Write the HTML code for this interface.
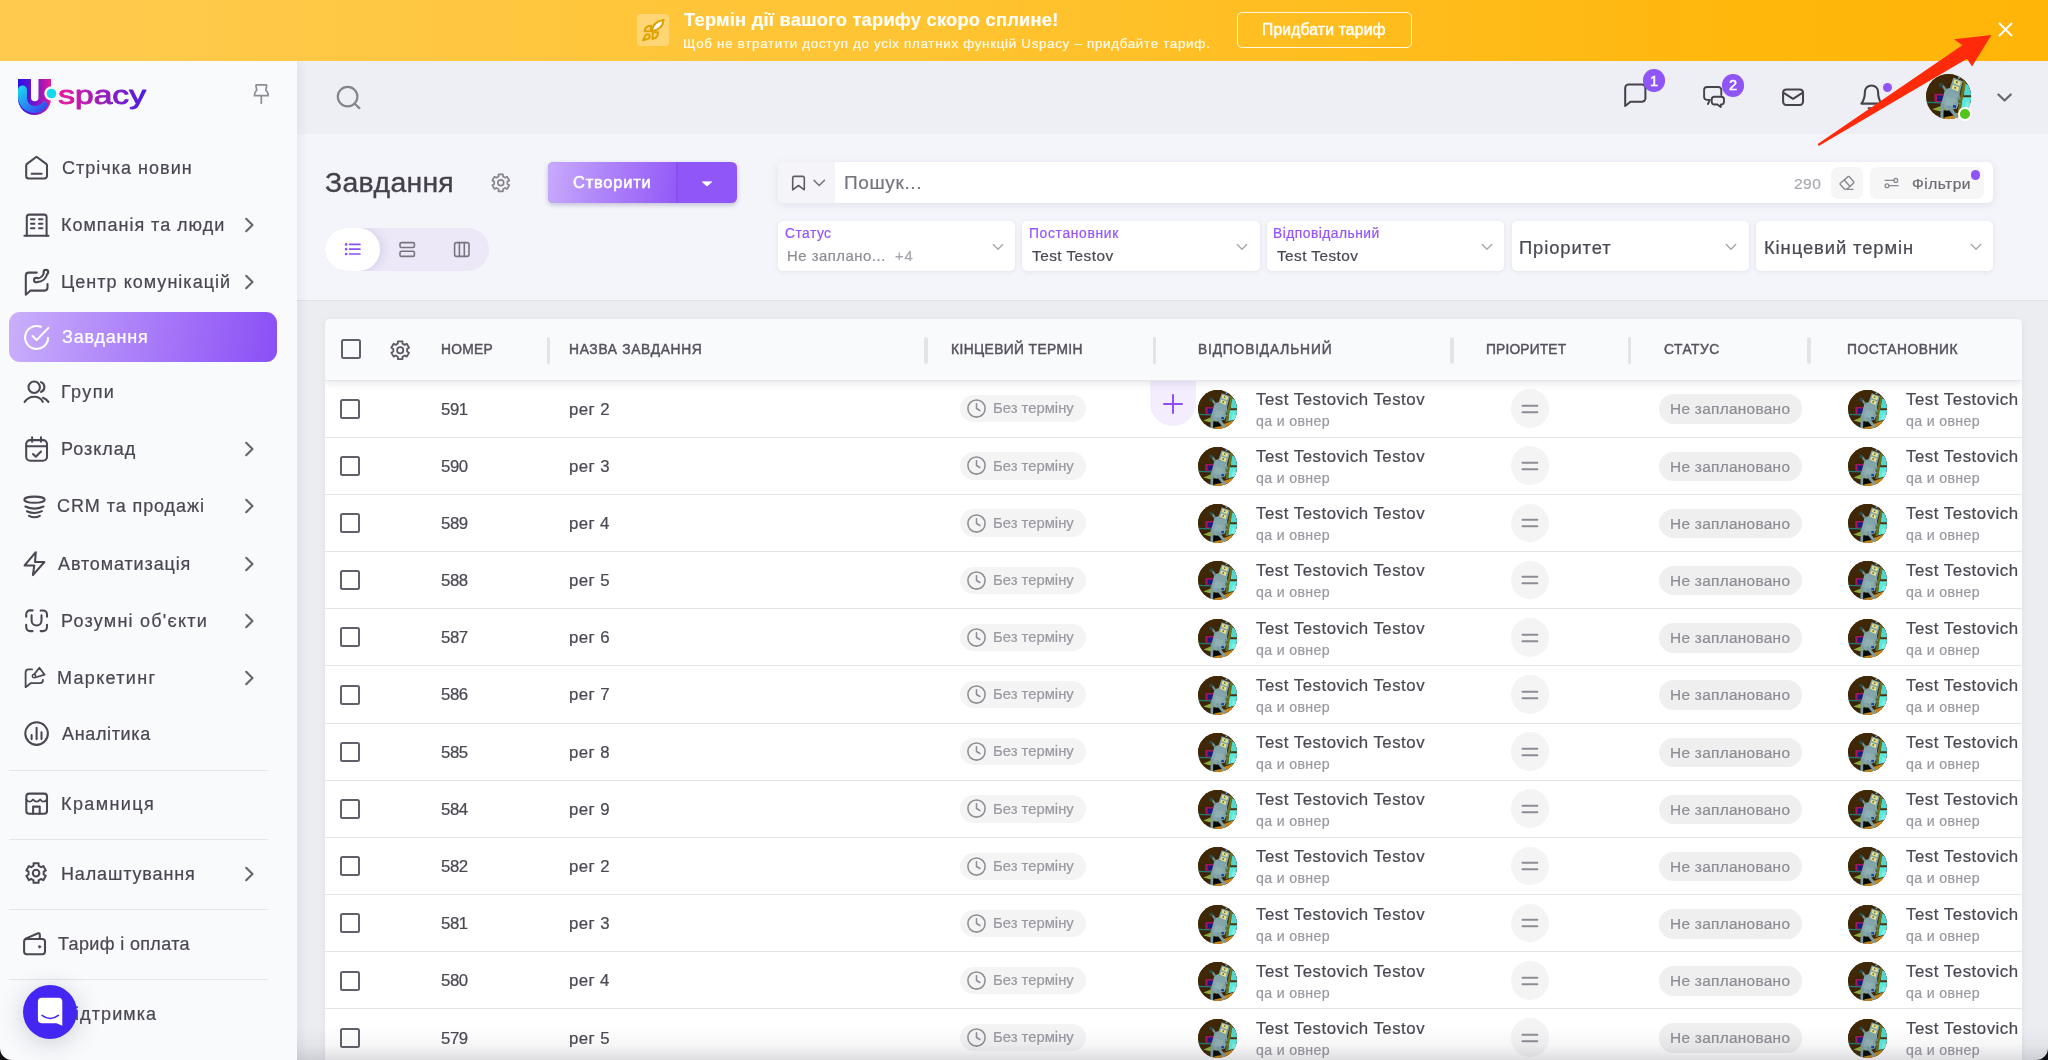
<!DOCTYPE html>
<html lang="uk"><head><meta charset="utf-8"><title>Завдання — Uspacy</title>
<style>
*{box-sizing:border-box;margin:0;padding:0}
html,body{width:2048px;height:1060px;overflow:hidden}
body{font-family:"Liberation Sans",sans-serif;background:#ecedf1;position:relative;color:#4a4852}
#root{position:absolute;left:0;top:0;width:2048px;height:1060px;overflow:hidden;transform:translateZ(0)}
.t{position:absolute;white-space:pre;display:block;-webkit-text-stroke:.22px currentColor;will-change:transform}
.i{position:absolute;display:block;overflow:visible}
.abs{position:absolute}
#banner{position:absolute;left:0;top:0;width:2048px;height:60.5px;z-index:5;background:linear-gradient(90deg,#ffca4f 0%,#ffc432 45%,#ffb70c 85%,#ffb508 100%)}
#side{position:absolute;left:0;top:60px;width:296.8px;height:1000px;background:#f9fafc;box-shadow:2px 0 10px rgba(60,60,100,.085);z-index:3}
#hdr{position:absolute;left:297px;top:60px;width:1751px;height:74px;background:#eeeff4}
#tool{position:absolute;left:297px;top:134px;width:1751px;height:167px;background:#f4f5fa;border-bottom:1px solid #dfe0e6}
#sidec{position:absolute;left:0;top:0;width:297px;height:1060px;z-index:4}
.div{position:absolute;left:9px;width:259px;height:1px;background:#e4e4e9}
.fbox{position:absolute;top:221px;height:49.7px;background:#fff;border-radius:5px;box-shadow:0 1px 4px rgba(70,60,110,.1)}
#table{position:absolute;left:325px;top:319px;width:1697px;height:760px;background:#fff;border-radius:5px 5px 0 0;overflow:hidden;box-shadow:0 1px 6px rgba(60,60,90,.08)}
#thead{position:absolute;left:0;top:0;width:1697px;height:61.5px;background:#f9fafc;box-shadow:0 2px 8px rgba(60,60,90,.13);border-bottom:1px solid #e6e6ea}
.row{position:absolute;left:0;width:1697px;height:57.2px;border-bottom:1px solid #e4e4e7}
.cb{position:absolute;width:20px;height:20px;border:2px solid #625f6b;border-radius:2.5px;background:#fff}
.cdiv{position:absolute;top:17.5px;width:3.6px;height:27px;border-radius:2px;background:#e4e4e8}
.pill{position:absolute;background:#f4f4f5;border-radius:14px}
</style></head><body><div id="root">

<div id="side"></div><div id="sidec">
<svg class="i" style="left:14px;top:72px" width="150" height="50" viewBox="0 0 150 50">
<defs><linearGradient id="lg1" x1="0" y1="0" x2="1" y2="0"><stop offset="0" stop-color="#2a10e8"/><stop offset=".55" stop-color="#7a16c8"/><stop offset="1" stop-color="#e8189a"/></linearGradient>
<linearGradient id="lg2" x1="0" y1="0" x2="1" y2="1"><stop offset="0" stop-color="#18e0f0"/><stop offset="1" stop-color="#3a30f0"/></linearGradient>
<linearGradient id="lg3" x1="0" y1="0" x2="1" y2="0"><stop offset="0" stop-color="#e8189a"/><stop offset="1" stop-color="#4a1ee0"/></linearGradient></defs>
<path d="M4 7h33v19.5a16.5 16.5 0 0 1-33 0z" fill="url(#lg1)"/>
<path d="M4 18a4.5 4.5 0 0 1 9 0v8.5a7.5 7.5 0 0 0 7.5 7.5c4 0 7.5-2 9.5-5.5l4.5 4c-3 5-8 8.5-14 8.5a16.5 16.5 0 0 1-16.5-16.5z" fill="url(#lg2)"/>
<path d="M17 7h7.5v18.5a3.75 3.75 0 0 1-7.5 0z" fill="#f9fafc"/>
<circle cx="37.5" cy="21.5" r="7.2" fill="#f9fafc"/><circle cx="37.5" cy="21.5" r="4.8" fill="#14d8f0"/>
<text x="44.3" y="32.4" font-family="Liberation Sans, sans-serif" font-size="25.6" font-weight="400" fill="url(#lg3)" stroke="url(#lg3)" stroke-width=".9" stroke-linejoin="round" textLength="87.6" lengthAdjust="spacingAndGlyphs">spacy</text>
</svg>
<svg class="i" style="left:252px;top:82px;" width="20" height="24" viewBox="252 82 20 24" fill="none" stroke="#8e8c94" stroke-width="1.7" stroke-linecap="round" stroke-linejoin="round"><path d="M256.6 84.9h9.4c.5 0 .8.4.7.9l-.9 4.3c1.5 1.1 2.4 2.9 2.4 5.6H254.4c0-2.7.9-4.5 2.4-5.6l-.9-4.3c-.1-.5.2-.9.7-.9zM261.3 95.7v7.5"/></svg>
<div class="abs" style="left:9px;top:311.9px;width:268px;height:50px;border-radius:11px;background:linear-gradient(100deg,#c9b0fb 0%,#ad82f9 45%,#8a4ff6 100%)"></div>
<svg class="i" style="left:22px;top:152px;" width="30" height="30" viewBox="22 152 30 30" fill="none" stroke="#4a4752" stroke-width="2.05" stroke-linecap="round" stroke-linejoin="round"><path d="M36.5 156.7l9.7 7.2q.8.6.8 1.6v10.4a2.5 2.5 0 0 1-2.5 2.5H28.7a2.5 2.5 0 0 1-2.5-2.5V165.5q0-1 .8-1.6z"/><path d="M31.7 173.8h9.9"/></svg>
<span class="t" style="left:61.7px;top:157px;font-size:18px;line-height:22px;letter-spacing:1.021px;color:#4a4752;">Стрічка новин</span>
<svg class="i" style="left:22px;top:210px;" width="30" height="30" viewBox="22 210 30 30" fill="none" stroke="#4a4752" stroke-width="2.05" stroke-linecap="round" stroke-linejoin="round"><path d="M26.8 235.7V217.1a2.5 2.5 0 0 1 2.5-2.5h14.8a2.5 2.5 0 0 1 2.5 2.5v18.6"/><path d="M24.4 235.7h24.1"/><path d="M31 219.3h3.4M39 219.3h3.4M31 223.8h3.4M39 223.8h3.4M31 228.3h3.4M39 228.3h3.4"/></svg>
<span class="t" style="left:61.2px;top:214px;font-size:18px;line-height:22px;letter-spacing:0.977px;color:#4a4752;">Компанія та люди</span>
<svg class="i" style="left:240px;top:214.9px;" width="20" height="20" viewBox="240 214.9 20 20" fill="none" stroke="#67646e" stroke-width="2.1" stroke-linecap="round" stroke-linejoin="round"><path d="M246.2 218.7l6.3 6.2-6.3 6.2"/></svg>
<svg class="i" style="left:22px;top:266px;" width="30" height="32" viewBox="22 266 30 32" fill="none" stroke="#4a4752" stroke-width="2.05" stroke-linecap="round" stroke-linejoin="round"><path d="M36.8 272.6H28.8a3 3 0 0 0-3 3v19.2l4.8-4.2h13.9a3 3 0 0 0 3-3V284"/><path d="M36.3 280.2q8 .3 9.6-8.2" stroke-width="5.4"/><circle cx="36.3" cy="280.1" r="2.3" fill="#4a4752"/><circle cx="45.9" cy="272.1" r="2.3" fill="#4a4752"/><path d="M36.3 280.2q8 .3 9.6-8.2" stroke="#f9fafc" stroke-width="1.5"/><circle cx="36.3" cy="280.1" r="1.2" fill="#f9fafc" stroke="none"/><circle cx="45.9" cy="272.1" r="1.2" fill="#f9fafc" stroke="none"/></svg>
<span class="t" style="left:61.2px;top:271px;font-size:18px;line-height:22px;letter-spacing:1.019px;color:#4a4752;">Центр комунікацій</span>
<svg class="i" style="left:240px;top:271.9px;" width="20" height="20" viewBox="240 271.9 20 20" fill="none" stroke="#67646e" stroke-width="2.1" stroke-linecap="round" stroke-linejoin="round"><path d="M246.2 275.7l6.3 6.2-6.3 6.2"/></svg>
<svg class="i" style="left:22px;top:322px;" width="30" height="30" viewBox="22 322 30 30" fill="none" stroke="#ffffff" stroke-width="2.05" stroke-linecap="round" stroke-linejoin="round"><path d="M48.1 337.9A11.5 11.5 0 1 1 40.9 326.8"/><path d="M32.6 336l4 4.1 11.8-12.2"/></svg>
<span class="t" style="left:62.35px;top:326px;font-size:18px;line-height:22px;letter-spacing:0.757px;color:#ffffff;">Завдання</span>
<svg class="i" style="left:22px;top:378px;" width="30" height="28" viewBox="22 378 30 28" fill="none" stroke="#4a4752" stroke-width="2.05" stroke-linecap="round" stroke-linejoin="round"><circle cx="34.2" cy="387.3" r="5.7"/><path d="M24.6 401.9q3.4-5.2 9.6-5.2t8.6 5.2"/><path d="M41 382.1a5.3 5.3 0 0 1 0 9.9"/><path d="M43 397.7q3.4 1 5.4 4.2"/></svg>
<span class="t" style="left:61.2px;top:381px;font-size:18px;line-height:22px;letter-spacing:1.388px;color:#4a4752;">Групи</span>
<svg class="i" style="left:22px;top:434px;" width="30" height="30" viewBox="22 434 30 30" fill="none" stroke="#4a4752" stroke-width="2.05" stroke-linecap="round" stroke-linejoin="round"><rect x="26.2" y="440.1" width="20.8" height="20.7" rx="4"/><path d="M32.1 437.2v4.6M41 437.2v4.6M26.2 446.3h20.8"/><path d="M32.9 454.1l2.9 2.6 5.2-5.2"/></svg>
<span class="t" style="left:61.2px;top:438px;font-size:18px;line-height:22px;letter-spacing:0.983px;color:#4a4752;">Розклад</span>
<svg class="i" style="left:240px;top:438.9px;" width="20" height="20" viewBox="240 438.9 20 20" fill="none" stroke="#67646e" stroke-width="2.1" stroke-linecap="round" stroke-linejoin="round"><path d="M246.2 442.7l6.3 6.2-6.3 6.2"/></svg>
<svg class="i" style="left:22px;top:494px;" width="28" height="28" viewBox="22 494 28 28" fill="none" stroke="#4a4752" stroke-width="2.05" stroke-linecap="round" stroke-linejoin="round"><ellipse cx="34.5" cy="499.7" rx="10.2" ry="3.1"/><path d="M25.4 506.5q9.1 4.2 18.1 0"/><path d="M26.9 511.2q7.6 3.6 15.1 0"/><path d="M29 515.8q5.5 2.8 10.9 0"/></svg>
<span class="t" style="left:57.2px;top:495px;font-size:18px;line-height:22px;letter-spacing:0.919px;color:#4a4752;">CRM та продажі</span>
<svg class="i" style="left:240px;top:496.3px;" width="20" height="20" viewBox="240 496.3 20 20" fill="none" stroke="#67646e" stroke-width="2.1" stroke-linecap="round" stroke-linejoin="round"><path d="M246.2 500.1l6.3 6.2-6.3 6.2"/></svg>
<svg class="i" style="left:22px;top:548px;" width="28" height="32" viewBox="22 548 28 32" fill="none" stroke="#4a4752" stroke-width="2.05" stroke-linecap="round" stroke-linejoin="round"><path d="M35.8 552.2L24.6 565.4h9.7l-1.4 9.7 11.5-13.1h-9.4z"/></svg>
<span class="t" style="left:58.2px;top:553px;font-size:18px;line-height:22px;letter-spacing:0.875px;color:#4a4752;">Автоматизація</span>
<svg class="i" style="left:240px;top:553.5px;" width="20" height="20" viewBox="240 553.5 20 20" fill="none" stroke="#67646e" stroke-width="2.1" stroke-linecap="round" stroke-linejoin="round"><path d="M246.2 557.3l6.3 6.2-6.3 6.2"/></svg>
<svg class="i" style="left:22px;top:606px;" width="30" height="30" viewBox="22 606 30 30" fill="none" stroke="#4a4752" stroke-width="2.05" stroke-linecap="round" stroke-linejoin="round"><path d="M26.2 616.8v-2.4a4 4 0 0 1 4-4h2.4M40.6 610.4h2.4a4 4 0 0 1 4 4v2.4M47 624.7v2.4a4 4 0 0 1-4 4h-2.4M32.6 631.1h-2.4a4 4 0 0 1-4-4v-2.4"/><path d="M31.6 615.3v5.3a4.95 4.95 0 0 0 9.9 0v-5.3"/></svg>
<span class="t" style="left:61.3px;top:610px;font-size:18px;line-height:22px;letter-spacing:1.232px;color:#4a4752;">Розумні об'єкти</span>
<svg class="i" style="left:240px;top:610.7px;" width="20" height="20" viewBox="240 610.7 20 20" fill="none" stroke="#67646e" stroke-width="2.1" stroke-linecap="round" stroke-linejoin="round"><path d="M246.2 614.5l6.3 6.2-6.3 6.2"/></svg>
<svg class="i" style="left:22px;top:664px;" width="28" height="28" viewBox="22 664 28 28" fill="none" stroke="#4a4752" stroke-width="2.05" stroke-linecap="round" stroke-linejoin="round"><path d="M32.1 669.3h-3.6a2.9 2.9 0 0 0-2.9 2.9v15l5-4h9.4a2.9 2.9 0 0 0 2.9-2.9v-.5" stroke-width="1.8"/><path d="M34.3 674.2l5.1-6.5 5.2 7-9.3 2.8" stroke-width="1.8"/><circle cx="34" cy="676.1" r="1.7" stroke-width="1.5"/></svg>
<span class="t" style="left:57.1px;top:667px;font-size:18px;line-height:22px;letter-spacing:1.312px;color:#4a4752;">Маркетинг</span>
<svg class="i" style="left:240px;top:667.9px;" width="20" height="20" viewBox="240 667.9 20 20" fill="none" stroke="#67646e" stroke-width="2.1" stroke-linecap="round" stroke-linejoin="round"><path d="M246.2 671.7l6.3 6.2-6.3 6.2"/></svg>
<svg class="i" style="left:22px;top:718px;" width="30" height="32" viewBox="22 718 30 32" fill="none" stroke="#4a4752" stroke-width="2.05" stroke-linecap="round" stroke-linejoin="round"><circle cx="36.6" cy="733.6" r="11.3"/><path d="M31.6 734.9v4.2M36.6 727.7v11.4M41.5 732.3v6.8"/></svg>
<span class="t" style="left:62.1px;top:723px;font-size:18px;line-height:22px;letter-spacing:0.65px;color:#4a4752;">Аналітика</span>
<svg class="i" style="left:22px;top:788px;" width="30" height="32" viewBox="22 788 30 32" fill="none" stroke="#4a4752" stroke-width="2.05" stroke-linecap="round" stroke-linejoin="round"><rect x="26.3" y="793.6" width="20.7" height="20.1" rx="2.8"/><path d="M26.3 799.4q3.3 4.6 6.6 0q3.7 4.6 7.4 0q3.3 4.6 6.7 0" stroke-width="1.8"/><path d="M33.1 813.7v-7.1h6.6v7.1"/></svg>
<span class="t" style="left:61px;top:793px;font-size:18px;line-height:22px;letter-spacing:1.393px;color:#4a4752;">Крамниця</span>
<svg class="i" style="left:24.4px;top:861.4px;" width="24.2" height="24.2" viewBox="24.4 861.4 24.2 24.2" fill="none" stroke="#4a4752" stroke-width="2" stroke-linecap="round" stroke-linejoin="round"><path d="M33.93 866.24L33.97 863.72L39.03 863.72L39.07 866.24L41.5 867.64L43.7 866.42L46.23 870.8L44.07 872.1L44.07 874.9L46.23 876.2L43.7 880.58L41.5 879.36L39.07 880.76L39.03 883.28L33.97 883.28L33.93 880.76L31.5 879.36L29.3 880.58L26.77 876.2L28.93 874.9L28.93 872.1L26.77 870.8L29.3 866.42L31.5 867.64z"/><circle cx="36.5" cy="873.5" r="3.3"/></svg>
<span class="t" style="left:61px;top:863px;font-size:18px;line-height:22px;letter-spacing:0.85px;color:#4a4752;">Налаштування</span>
<svg class="i" style="left:240px;top:863.9px;" width="20" height="20" viewBox="240 863.9 20 20" fill="none" stroke="#67646e" stroke-width="2.1" stroke-linecap="round" stroke-linejoin="round"><path d="M246.2 867.7l6.3 6.2-6.3 6.2"/></svg>
<svg class="i" style="left:20px;top:928px;" width="30" height="32" viewBox="20 928 30 32" fill="none" stroke="#4a4752" stroke-width="2.05" stroke-linecap="round" stroke-linejoin="round"><rect x="24.1" y="939" width="20.9" height="15.2" rx="2.6"/><path d="M25.5 938.6l12.7-5.3q1.5-.5 1.6 1v4.3"/><circle cx="39.6" cy="946.8" r="1.2" fill="#4a4752" stroke-width=".6"/></svg>
<span class="t" style="left:57.6px;top:933px;font-size:18px;line-height:22px;letter-spacing:0.354px;color:#4a4752;">Тариф і оплата</span>
<svg class="i" style="left:22px;top:998px;" width="30" height="32" viewBox="22 998 30 32" fill="none" stroke="#4a4752" stroke-width="2.05" stroke-linecap="round" stroke-linejoin="round"><circle cx="36.6" cy="1013.3" r="11.3"/></svg>
<span class="t" style="left:61px;top:1003px;font-size:18px;line-height:22px;letter-spacing:1.087px;color:#4a4752;">Підтримка</span>
<div class="div" style="top:769.6px"></div>
<div class="div" style="top:838.8px"></div>
<div class="div" style="top:908.8px"></div>
<div class="div" style="top:978.9px"></div>
<div class="abs" style="left:23.2px;top:984.9px;width:54px;height:54px;border-radius:50%;background:#4326f1;box-shadow:0 4px 26px rgba(30,30,60,.2)"></div>
<svg class="i" style="left:34px;top:994px;" width="32" height="36" viewBox="34 994 32 36" fill="none" stroke="#4a4752" stroke-width="2" stroke-linecap="round" stroke-linejoin="round"><path d="M41.9 997.7h16.4a4 4 0 0 1 4 4v24.1l-5.8-2.6H41.9a4 4 0 0 1-4-4v-17.5a4 4 0 0 1 4-4z" fill="#fff" stroke="none"/><path d="M42 1015.4q8.2 6.2 16.4 0" stroke="#4326f1" stroke-width="1.6"/></svg>
<svg class="i" style="left:0;top:1048px" width="12" height="12" viewBox="0 0 12 12"><path d="M0 0v12h12A12 12 0 0 1 0 0z" fill="#101014"/></svg>
</div>
<div id="hdr"></div>
<svg class="i" style="left:334px;top:84px;" width="30" height="28" viewBox="334 84 30 28" fill="none" stroke="#85838b" stroke-width="2.2" stroke-linecap="round" stroke-linejoin="round"><circle cx="347.6" cy="96.6" r="9.8"/><path d="M355 104l4.4 4.1"/></svg>
<svg class="i" style="left:1620px;top:80px;" width="30" height="30" viewBox="1620 80 30 30" fill="none" stroke="#45424d" stroke-width="2.05" stroke-linecap="round" stroke-linejoin="round"><path d="M1625.2 106V88a3.5 3.5 0 0 1 3.5-3.5h13.2a3.5 3.5 0 0 1 3.5 3.5v10.2a3.5 3.5 0 0 1-3.5 3.5h-11.4z"/></svg>
<svg class="i" style="left:1700px;top:82px;" width="30" height="28" viewBox="1700 82 30 28" fill="none" stroke="#45424d" stroke-width="1.9" stroke-linecap="round" stroke-linejoin="round"><path d="M1707.9 104l2-4.1h-2.8a3 3 0 0 1-3-3V90a3 3 0 0 1 3-3h11.2a3 3 0 0 1 3 3v5"/><path d="M1714.4 96.8h6.9a2.7 2.7 0 0 1 2.7 2.7v2.3a2.7 2.7 0 0 1-2.7 2.7h-.4l-.2 2.5-3.2-2.5h-3.1a2.7 2.7 0 0 1-2.7-2.7v-2.3a2.7 2.7 0 0 1 2.7-2.7z" fill="#eeeff4"/></svg>
<svg class="i" style="left:1778px;top:84px;" width="30" height="26" viewBox="1778 84 30 26" fill="none" stroke="#45424d" stroke-width="2.05" stroke-linecap="round" stroke-linejoin="round"><rect x="1783.1" y="89.4" width="19.9" height="15.6" rx="3.2"/><path d="M1784.5 93.3l8.5 5.5 8.6-5.5"/></svg>
<svg class="i" style="left:1856px;top:80px;" width="32" height="32" viewBox="1856 80 32 32" fill="none" stroke="#45424d" stroke-width="2.05" stroke-linecap="round" stroke-linejoin="round"><path d="M1864.9 92a6.6 6.6 0 0 1 13.2 0c0 6.5 1.4 9 3.5 11.6h-20.3c2.1-2.6 3.6-5.1 3.6-11.6z"/><path d="M1868.7 108.2h5.8"/></svg>
<div class="abs" style="left:1642.8px;top:69.1px;width:22.6px;height:22.6px;border-radius:50%;background:#8f55f7"></div>
<span class="t" style="left:1649.95px;top:72px;font-size:14.5px;line-height:18px;letter-spacing:0px;color:#fff;-webkit-text-stroke:.5px #fff;">1</span>
<div class="abs" style="left:1721.5px;top:74px;width:22.6px;height:22.6px;border-radius:50%;background:#8f55f7"></div>
<span class="t" style="left:1728.9px;top:76px;font-size:14.5px;line-height:18px;letter-spacing:0px;color:#fff;-webkit-text-stroke:.5px #fff;">2</span>
<div class="abs" style="left:1883px;top:82.6px;width:9.4px;height:9.4px;border-radius:50%;background:#8f55f7"></div>
<svg class="i" style="left:1994px;top:88px;" width="22" height="18" viewBox="1994 88 22 18" fill="none" stroke="#67646e" stroke-width="2.2" stroke-linecap="round" stroke-linejoin="round"><path d="M1998.4 94.5l6.2 6 6.2-6"/></svg>
<svg class="i" style="left:1925.8px;top:74.4px" width="45.2" height="45.2" viewBox="0 0 40 40"><clipPath id="c1"><circle cx="20" cy="20" r="20"/></clipPath><g clip-path="url(#c1)">
<rect width="40" height="40" fill="#3b2506"/>
<path d="M0 0h26l-8 12-18 8z" fill="#402807"/>
<path d="M30 3l10 5v30l-12 2z" fill="#4a3410"/>
<path d="M34.5 8.5l5.5 2v8.3h-6.5z" fill="#50d6cd"/>
<path d="M32 20.6h8v9l-9 2.4z" fill="#5de6dc"/>
<path d="M36 24l4 4v3l-6-1z" fill="#7af0e6"/>
<path d="M33.3 5.5l2.3 1-5.3 26.5-2.3-.5z" fill="#69731f"/>
<path d="M15 40l4-4 10-2 9-3.5v9.5z" fill="#c6871c"/>
<path d="M7.5 17.5h8v7.5h-8z" fill="#a4175a"/>
<path d="M9.8 19h6.2v5h-6.2z" fill="#1b1b7c"/>
<path d="M0 24.3l14 .6v1.3l-14-.5z" fill="#1f7d79"/>
<path d="M5.5 31.3l8-3.3 4.5 3.8-6 1.2z" fill="#8daa3b"/>
<path d="M14 32.5h9.5l2 4-11 2z" fill="#070a06"/>
<path d="M16.8 13.5l6-1.5 6.5 3 1 7.5-3 8-9 2-5.3-5 2.3-7.5z" fill="#84a5a9"/>
<path d="M18 20l8 2-1.5 7-8-2z" fill="#8fb0b3"/>
<path d="M24.3 3.2l8.3 3.2-3.3 12-9-3.7z" fill="#7ea3a8"/>
<path d="M28.8 1.3l1.7.6-.8 2.5-1.7-.6z" fill="#7ea3a8"/>
<path d="M25.2 4.8l5.7 2.2-1 3.4-5.7-2.2z" fill="#e6df8c"/>
<path d="M23.7 9.6l5.6 2.2-1 3.5-5.6-2.2z" fill="#e6df8c"/>
<path d="M26.8 6.3l1.5.6-.5 1.5-1.5-.6zM25.3 11.2l1.5.6-.5 1.5-1.5-.6z" fill="#5f6b3a"/>
<path d="M12.8 9.2l2.7.5 3.3 4.3-1.8 1.6z" fill="#6f9195"/>
<path d="M11.6 8h3.3v3.2h-3.3z" fill="#274b47"/>
<path d="M27.5 20l3 1 .5 5-2 .5z" fill="#708f93"/>
<path d="M28.3 22.5h2.7v3.2h-2.7z" fill="#5b6a2a"/>
<path d="M13 26.5h2.7l-.3 13.5h-2.7z" fill="#7b9da3"/>
<path d="M18.5 29.5l2.5-1.8 8.2 10.5-2.6 1.5z" fill="#7b9da3"/>
<path d="M24 27.3l2.8.5-.3 2.3-2.8-.5z" fill="#1c3da2"/>
</g></svg>
<div class="abs" style="left:1958.1px;top:107px;width:13.6px;height:13.6px;border-radius:50%;background:#52c41a;border:2px solid #fff"></div>
<div id="tool"></div>
<span class="t" style="left:325.4px;top:164px;font-size:28.4px;line-height:36px;letter-spacing:0.279px;color:#44414c;-webkit-text-stroke:.35px #44414c;">Завдання</span>
<svg class="i" style="left:489.8px;top:172.1px;" width="21.6" height="21.6" viewBox="489.8 172.1 21.6 21.6" fill="none" stroke="#85838b" stroke-width="1.7" stroke-linecap="round" stroke-linejoin="round"><path d="M498.36 176.58L498.4 174.38L502.8 174.38L502.84 176.58L504.95 177.81L506.88 176.73L509.08 180.55L507.19 181.68L507.19 184.12L509.08 185.25L506.88 189.07L504.95 187.99L502.84 189.22L502.8 191.42L498.4 191.42L498.36 189.22L496.25 187.99L494.32 189.07L492.12 185.25L494.01 184.12L494.01 181.68L492.12 180.55L494.32 176.73L496.25 177.81z"/><circle cx="500.6" cy="182.9" r="2.9"/></svg>
<div class="abs" style="left:548px;top:162px;width:189.1px;height:41.4px;border-radius:5.5px;background:#9056f8;box-shadow:0 2px 5px rgba(70,50,120,.28);overflow:hidden"><div class="abs" style="left:0;top:0;width:128.5px;height:41.4px;background:linear-gradient(100deg,#c8abfc 0%,#ae83fa 45%,#9259f7 100%)"></div></div>
<div class="abs" style="left:676px;top:162px;width:1.5px;height:41.4px;background:#8950f0"></div>
<span class="t" style="left:573.35px;top:172px;font-size:16.4px;line-height:20px;letter-spacing:0.829px;color:#fff;-webkit-text-stroke:.55px #fff;">Створити</span>
<svg class="i" style="left:701.3px;top:180.8px" width="12" height="7" viewBox="0 0 12 7"><path d="M1.4 .9h9.2L6 5z" fill="#fff" stroke="#fff" stroke-width="1" stroke-linejoin="round"/></svg>
<div class="abs" style="left:325px;top:228px;width:164.2px;height:42.8px;border-radius:21.4px;background:#ece8f7;overflow:hidden"><div class="abs" style="left:0;top:0;width:55px;height:42.8px;border-radius:21.4px;background:#fff;box-shadow:3px 0 9px rgba(120,90,190,.16)"></div></div>
<svg class="i" style="left:342px;top:240px;" width="22" height="20" viewBox="342 240 22 20" fill="none" stroke="#8b50f5" stroke-width="2" stroke-linecap="round" stroke-linejoin="round"><path d="M349.6 244.4h10.3M349.6 249.2h10.3M349.6 254h10.3" stroke-width="1.7"/><path d="M346.1 244.4h.01M346.1 249.2h.01M346.1 254h.01" stroke-width="2.7"/></svg>
<svg class="i" style="left:396px;top:238px;" width="22" height="22" viewBox="396 238 22 22" fill="none" stroke="#77757d" stroke-width="1.6" stroke-linecap="round" stroke-linejoin="round"><rect x="400" y="242.6" width="14.4" height="4.9" rx="1.5"/><rect x="400" y="251.3" width="14.4" height="5.1" rx="1.5"/></svg>
<svg class="i" style="left:450px;top:238px;" width="24" height="22" viewBox="450 238 24 22" fill="none" stroke="#77757d" stroke-width="1.6" stroke-linecap="round" stroke-linejoin="round"><rect x="454.6" y="242.6" width="14.4" height="13.8" rx="1.8"/><path d="M459.4 242.6v13.8M464.3 242.6v13.8"/></svg>
<div class="abs" style="left:778px;top:162.2px;width:1215px;height:41.3px;border-radius:6px;background:#fff;box-shadow:0 2px 8px rgba(70,60,110,.1)"></div>
<div class="abs" style="left:778px;top:162.2px;width:57px;height:41.3px;border-radius:6px 0 0 6px;background:#f5f5f9"></div>
<svg class="i" style="left:788px;top:172px;" width="22" height="22" viewBox="788 172 22 22" fill="none" stroke="#5f5c68" stroke-width="1.6" stroke-linecap="round" stroke-linejoin="round"><path d="M794.2 176.4h8.6a1.5 1.5 0 0 1 1.5 1.5v11.9l-5.8-4.3-5.8 4.3v-11.9a1.5 1.5 0 0 1 1.5-1.5z"/></svg>
<svg class="i" style="left:810px;top:176px;" width="18" height="14" viewBox="810 176 18 14" fill="none" stroke="#77757d" stroke-width="1.5" stroke-linecap="round" stroke-linejoin="round"><path d="M814.1 180.4l5.1 5.1 5.2-5.1"/></svg>
<span class="t" style="left:844px;top:171px;font-size:19px;line-height:24px;letter-spacing:0.636px;color:#77757d;">Пошук...</span>
<span class="t" style="left:1794.05px;top:174px;font-size:15.5px;line-height:19px;letter-spacing:0.5px;color:#aaa8b0;">290</span>
<div class="abs" style="left:1831px;top:167px;width:31.9px;height:31.8px;border-radius:7px;background:#f6f6f7"></div>
<svg class="i" style="left:1838px;top:172px;" width="20" height="22" viewBox="1838 172 20 22" fill="none" stroke="#8a8890" stroke-width="1.4" stroke-linecap="round" stroke-linejoin="round"><path d="M1849.3 176.6l4.4 5.1q.5.6-.1 1.2l-6.4 6.2h-2.7l-4.3-4.6q-.5-.6.1-1.2l7.8-6.7q.6-.5 1.2 0z"/><path d="M1844.5 180.2l5.3 6M1846.5 189.4h6.5"/></svg>
<div class="abs" style="left:1870px;top:167px;width:113.9px;height:31.8px;border-radius:7px;background:#f6f6f7"></div>
<svg class="i" style="left:1880px;top:174px;" width="24" height="18" viewBox="1880 174 24 18" fill="none" stroke="#8a8890" stroke-width="1.3" stroke-linecap="round" stroke-linejoin="round"><path d="M1885.1 180.3h8.6M1889.2 185.7h8.8"/><circle cx="1895.8" cy="180.4" r="1.9"/><circle cx="1887" cy="185.7" r="1.9"/></svg>
<span class="t" style="left:1911.6px;top:174px;font-size:15.5px;line-height:19px;letter-spacing:0.483px;color:#6e6c75;">Фільтри</span>
<div class="abs" style="left:1971.1px;top:170.4px;width:9.4px;height:9.4px;border-radius:50%;background:#8f55f7"></div>
<div class="fbox" style="left:778px;width:237.2px"></div>
<svg class="i" style="left:990.1px;top:240px;" width="16" height="14" viewBox="990.1 240 16 14" fill="none" stroke="#a8a6ae" stroke-width="1.4" stroke-linecap="round" stroke-linejoin="round"><path d="M993.4 244.4l4.7 4.8 4.7-4.8"/></svg>
<div class="fbox" style="left:1022px;width:237.5px"></div>
<svg class="i" style="left:1234.4px;top:240px;" width="16" height="14" viewBox="1234.4 240 16 14" fill="none" stroke="#a8a6ae" stroke-width="1.4" stroke-linecap="round" stroke-linejoin="round"><path d="M1237.7 244.4l4.7 4.8 4.7-4.8"/></svg>
<div class="fbox" style="left:1267px;width:237px"></div>
<svg class="i" style="left:1478.9px;top:240px;" width="16" height="14" viewBox="1478.9 240 16 14" fill="none" stroke="#a8a6ae" stroke-width="1.4" stroke-linecap="round" stroke-linejoin="round"><path d="M1482.2 244.4l4.7 4.8 4.7-4.8"/></svg>
<div class="fbox" style="left:1511.5px;width:237px"></div>
<svg class="i" style="left:1723.4px;top:240px;" width="16" height="14" viewBox="1723.4 240 16 14" fill="none" stroke="#a8a6ae" stroke-width="1.4" stroke-linecap="round" stroke-linejoin="round"><path d="M1726.7 244.4l4.7 4.8 4.7-4.8"/></svg>
<div class="fbox" style="left:1756px;width:237px"></div>
<svg class="i" style="left:1967.9px;top:240px;" width="16" height="14" viewBox="1967.9 240 16 14" fill="none" stroke="#a8a6ae" stroke-width="1.4" stroke-linecap="round" stroke-linejoin="round"><path d="M1971.2 244.4l4.7 4.8 4.7-4.8"/></svg>
<span class="t" style="left:785.25px;top:225px;font-size:13.8px;line-height:17px;letter-spacing:0.48px;color:#9455f7;">Статус</span>
<span class="t" style="left:786.85px;top:247px;font-size:14.8px;line-height:18px;letter-spacing:0.55px;color:#8e8c94;">Не заплано...</span>
<span class="t" style="left:894.75px;top:247px;font-size:14.8px;line-height:18px;letter-spacing:0.75px;color:#a8a6ae;">+4</span>
<span class="t" style="left:1028.5px;top:225px;font-size:13.8px;line-height:17px;letter-spacing:0.695px;color:#9455f7;">Постановник</span>
<span class="t" style="left:1032.25px;top:246px;font-size:15.4px;line-height:19px;letter-spacing:0.445px;color:#4a4852;">Test Testov</span>
<span class="t" style="left:1273.3px;top:225px;font-size:13.8px;line-height:17px;letter-spacing:0.492px;color:#9455f7;">Відповідальний</span>
<span class="t" style="left:1276.55px;top:246px;font-size:15.4px;line-height:19px;letter-spacing:0.415px;color:#4a4852;">Test Testov</span>
<span class="t" style="left:1519.3px;top:236px;font-size:18.4px;line-height:23px;letter-spacing:0.894px;color:#4a4852;">Пріоритет</span>
<span class="t" style="left:1763.8px;top:236px;font-size:18.4px;line-height:23px;letter-spacing:0.904px;color:#4a4852;">Кінцевий термін</span>
<div id="table">
<div class="row" style="top:61.5px"><div class="cb" style="left:15px;top:18.24px"></div></div>
<span class="t" style="left:116.35px;top:80px;font-size:16.8px;line-height:21px;letter-spacing:0px;color:#4a4852;letter-spacing:-.4px;">591</span>
<span class="t" style="left:244.4px;top:80px;font-size:16.8px;line-height:21px;letter-spacing:0.45px;color:#4a4852;">рег 2</span>
<div class="pill" style="left:635.3px;top:76.09px;width:126.1px;height:27.3px"></div>
<svg class="i" style="left:640.9px;top:79.19px;" width="21" height="21" viewBox="0 0 21 21" fill="none" stroke="#8e8c94" stroke-width="1.55" stroke-linecap="round" stroke-linejoin="round"><circle cx="10.5" cy="10.5" r="8.6"/><path d="M10.5 5.8v4.7l3.4 2"/></svg>
<span class="t" style="left:668.45px;top:80px;font-size:14.8px;line-height:18px;letter-spacing:0.015px;color:#9a98a0;">Без терміну</span>
<div class="abs" style="left:825.2px;top:55px;width:45.7px;height:51.8px;border-radius:0 0 22.85px 22.85px;background:#f3edfe"></div>
<svg class="i" style="left:837.1px;top:73.69px;" width="22" height="22" viewBox="0 0 22 22" fill="none" stroke="#8b4ff5" stroke-width="2" stroke-linecap="round" stroke-linejoin="round"><path d="M11 2v18M2 11h18"/></svg>
<svg class="i" style="left:873.1px;top:70.89px" width="39.1" height="39.1" viewBox="0 0 40 40"><clipPath id="c2"><circle cx="20" cy="20" r="20"/></clipPath><g clip-path="url(#c2)">
<rect width="40" height="40" fill="#3b2506"/>
<path d="M0 0h26l-8 12-18 8z" fill="#402807"/>
<path d="M30 3l10 5v30l-12 2z" fill="#4a3410"/>
<path d="M34.5 8.5l5.5 2v8.3h-6.5z" fill="#50d6cd"/>
<path d="M32 20.6h8v9l-9 2.4z" fill="#5de6dc"/>
<path d="M36 24l4 4v3l-6-1z" fill="#7af0e6"/>
<path d="M33.3 5.5l2.3 1-5.3 26.5-2.3-.5z" fill="#69731f"/>
<path d="M15 40l4-4 10-2 9-3.5v9.5z" fill="#c6871c"/>
<path d="M7.5 17.5h8v7.5h-8z" fill="#a4175a"/>
<path d="M9.8 19h6.2v5h-6.2z" fill="#1b1b7c"/>
<path d="M0 24.3l14 .6v1.3l-14-.5z" fill="#1f7d79"/>
<path d="M5.5 31.3l8-3.3 4.5 3.8-6 1.2z" fill="#8daa3b"/>
<path d="M14 32.5h9.5l2 4-11 2z" fill="#070a06"/>
<path d="M16.8 13.5l6-1.5 6.5 3 1 7.5-3 8-9 2-5.3-5 2.3-7.5z" fill="#84a5a9"/>
<path d="M18 20l8 2-1.5 7-8-2z" fill="#8fb0b3"/>
<path d="M24.3 3.2l8.3 3.2-3.3 12-9-3.7z" fill="#7ea3a8"/>
<path d="M28.8 1.3l1.7.6-.8 2.5-1.7-.6z" fill="#7ea3a8"/>
<path d="M25.2 4.8l5.7 2.2-1 3.4-5.7-2.2z" fill="#e6df8c"/>
<path d="M23.7 9.6l5.6 2.2-1 3.5-5.6-2.2z" fill="#e6df8c"/>
<path d="M26.8 6.3l1.5.6-.5 1.5-1.5-.6zM25.3 11.2l1.5.6-.5 1.5-1.5-.6z" fill="#5f6b3a"/>
<path d="M12.8 9.2l2.7.5 3.3 4.3-1.8 1.6z" fill="#6f9195"/>
<path d="M11.6 8h3.3v3.2h-3.3z" fill="#274b47"/>
<path d="M27.5 20l3 1 .5 5-2 .5z" fill="#708f93"/>
<path d="M28.3 22.5h2.7v3.2h-2.7z" fill="#5b6a2a"/>
<path d="M13 26.5h2.7l-.3 13.5h-2.7z" fill="#7b9da3"/>
<path d="M18.5 29.5l2.5-1.8 8.2 10.5-2.6 1.5z" fill="#7b9da3"/>
<path d="M24 27.3l2.8.5-.3 2.3-2.8-.5z" fill="#1c3da2"/>
</g></svg>
<span class="t" style="left:931.25px;top:70px;font-size:16.8px;line-height:21px;letter-spacing:0.53px;color:#4a4852;">Test Testovich Testov</span>
<span class="t" style="left:931px;top:93px;font-size:14.2px;line-height:18px;letter-spacing:0.333px;color:#9a98a0;">qa и овнер</span>
<div class="pill" style="left:1185.6px;top:70.14px;width:38.8px;height:38.7px;border-radius:50%"></div>
<svg class="i" style="left:1195px;top:79.84px;" width="20" height="20" viewBox="0 0 20 20" fill="none" stroke="#8e8c94" stroke-width="2" stroke-linecap="round" stroke-linejoin="round"><path d="M2.5 6.7h14.8M2.5 13.3h14.8"/></svg>
<div class="pill" style="left:1334.2px;top:75.49px;width:142.5px;height:29.4px;border-radius:14.7px;background:#efeff0"></div>
<span class="t" style="left:1345.35px;top:80px;font-size:15.4px;line-height:19px;letter-spacing:0.296px;color:#8e8c94;">Не заплановано</span>
<svg class="i" style="left:1523px;top:70.89px" width="39.1" height="39.1" viewBox="0 0 40 40"><clipPath id="c3"><circle cx="20" cy="20" r="20"/></clipPath><g clip-path="url(#c3)">
<rect width="40" height="40" fill="#3b2506"/>
<path d="M0 0h26l-8 12-18 8z" fill="#402807"/>
<path d="M30 3l10 5v30l-12 2z" fill="#4a3410"/>
<path d="M34.5 8.5l5.5 2v8.3h-6.5z" fill="#50d6cd"/>
<path d="M32 20.6h8v9l-9 2.4z" fill="#5de6dc"/>
<path d="M36 24l4 4v3l-6-1z" fill="#7af0e6"/>
<path d="M33.3 5.5l2.3 1-5.3 26.5-2.3-.5z" fill="#69731f"/>
<path d="M15 40l4-4 10-2 9-3.5v9.5z" fill="#c6871c"/>
<path d="M7.5 17.5h8v7.5h-8z" fill="#a4175a"/>
<path d="M9.8 19h6.2v5h-6.2z" fill="#1b1b7c"/>
<path d="M0 24.3l14 .6v1.3l-14-.5z" fill="#1f7d79"/>
<path d="M5.5 31.3l8-3.3 4.5 3.8-6 1.2z" fill="#8daa3b"/>
<path d="M14 32.5h9.5l2 4-11 2z" fill="#070a06"/>
<path d="M16.8 13.5l6-1.5 6.5 3 1 7.5-3 8-9 2-5.3-5 2.3-7.5z" fill="#84a5a9"/>
<path d="M18 20l8 2-1.5 7-8-2z" fill="#8fb0b3"/>
<path d="M24.3 3.2l8.3 3.2-3.3 12-9-3.7z" fill="#7ea3a8"/>
<path d="M28.8 1.3l1.7.6-.8 2.5-1.7-.6z" fill="#7ea3a8"/>
<path d="M25.2 4.8l5.7 2.2-1 3.4-5.7-2.2z" fill="#e6df8c"/>
<path d="M23.7 9.6l5.6 2.2-1 3.5-5.6-2.2z" fill="#e6df8c"/>
<path d="M26.8 6.3l1.5.6-.5 1.5-1.5-.6zM25.3 11.2l1.5.6-.5 1.5-1.5-.6z" fill="#5f6b3a"/>
<path d="M12.8 9.2l2.7.5 3.3 4.3-1.8 1.6z" fill="#6f9195"/>
<path d="M11.6 8h3.3v3.2h-3.3z" fill="#274b47"/>
<path d="M27.5 20l3 1 .5 5-2 .5z" fill="#708f93"/>
<path d="M28.3 22.5h2.7v3.2h-2.7z" fill="#5b6a2a"/>
<path d="M13 26.5h2.7l-.3 13.5h-2.7z" fill="#7b9da3"/>
<path d="M18.5 29.5l2.5-1.8 8.2 10.5-2.6 1.5z" fill="#7b9da3"/>
<path d="M24 27.3l2.8.5-.3 2.3-2.8-.5z" fill="#1c3da2"/>
</g></svg>
<span class="t" style="left:1580.75px;top:70px;font-size:16.8px;line-height:21px;letter-spacing:0.54px;color:#4a4852;">Test Testovich Testov</span>
<span class="t" style="left:1580.5px;top:93px;font-size:14.2px;line-height:18px;letter-spacing:0.333px;color:#9a98a0;">qa и овнер</span>
<div class="row" style="top:118.68px"><div class="cb" style="left:15px;top:18.24px"></div></div>
<span class="t" style="left:116.35px;top:137px;font-size:16.8px;line-height:21px;letter-spacing:0px;color:#4a4852;letter-spacing:-.4px;">590</span>
<span class="t" style="left:244.4px;top:137px;font-size:16.8px;line-height:21px;letter-spacing:0.45px;color:#4a4852;">рег 3</span>
<div class="pill" style="left:635.3px;top:133.27px;width:126.1px;height:27.3px"></div>
<svg class="i" style="left:640.9px;top:136.37px;" width="21" height="21" viewBox="0 0 21 21" fill="none" stroke="#8e8c94" stroke-width="1.55" stroke-linecap="round" stroke-linejoin="round"><circle cx="10.5" cy="10.5" r="8.6"/><path d="M10.5 5.8v4.7l3.4 2"/></svg>
<span class="t" style="left:668.45px;top:138px;font-size:14.8px;line-height:18px;letter-spacing:0.015px;color:#9a98a0;">Без терміну</span>
<svg class="i" style="left:873.1px;top:128.07px" width="39.1" height="39.1" viewBox="0 0 40 40"><clipPath id="c4"><circle cx="20" cy="20" r="20"/></clipPath><g clip-path="url(#c4)">
<rect width="40" height="40" fill="#3b2506"/>
<path d="M0 0h26l-8 12-18 8z" fill="#402807"/>
<path d="M30 3l10 5v30l-12 2z" fill="#4a3410"/>
<path d="M34.5 8.5l5.5 2v8.3h-6.5z" fill="#50d6cd"/>
<path d="M32 20.6h8v9l-9 2.4z" fill="#5de6dc"/>
<path d="M36 24l4 4v3l-6-1z" fill="#7af0e6"/>
<path d="M33.3 5.5l2.3 1-5.3 26.5-2.3-.5z" fill="#69731f"/>
<path d="M15 40l4-4 10-2 9-3.5v9.5z" fill="#c6871c"/>
<path d="M7.5 17.5h8v7.5h-8z" fill="#a4175a"/>
<path d="M9.8 19h6.2v5h-6.2z" fill="#1b1b7c"/>
<path d="M0 24.3l14 .6v1.3l-14-.5z" fill="#1f7d79"/>
<path d="M5.5 31.3l8-3.3 4.5 3.8-6 1.2z" fill="#8daa3b"/>
<path d="M14 32.5h9.5l2 4-11 2z" fill="#070a06"/>
<path d="M16.8 13.5l6-1.5 6.5 3 1 7.5-3 8-9 2-5.3-5 2.3-7.5z" fill="#84a5a9"/>
<path d="M18 20l8 2-1.5 7-8-2z" fill="#8fb0b3"/>
<path d="M24.3 3.2l8.3 3.2-3.3 12-9-3.7z" fill="#7ea3a8"/>
<path d="M28.8 1.3l1.7.6-.8 2.5-1.7-.6z" fill="#7ea3a8"/>
<path d="M25.2 4.8l5.7 2.2-1 3.4-5.7-2.2z" fill="#e6df8c"/>
<path d="M23.7 9.6l5.6 2.2-1 3.5-5.6-2.2z" fill="#e6df8c"/>
<path d="M26.8 6.3l1.5.6-.5 1.5-1.5-.6zM25.3 11.2l1.5.6-.5 1.5-1.5-.6z" fill="#5f6b3a"/>
<path d="M12.8 9.2l2.7.5 3.3 4.3-1.8 1.6z" fill="#6f9195"/>
<path d="M11.6 8h3.3v3.2h-3.3z" fill="#274b47"/>
<path d="M27.5 20l3 1 .5 5-2 .5z" fill="#708f93"/>
<path d="M28.3 22.5h2.7v3.2h-2.7z" fill="#5b6a2a"/>
<path d="M13 26.5h2.7l-.3 13.5h-2.7z" fill="#7b9da3"/>
<path d="M18.5 29.5l2.5-1.8 8.2 10.5-2.6 1.5z" fill="#7b9da3"/>
<path d="M24 27.3l2.8.5-.3 2.3-2.8-.5z" fill="#1c3da2"/>
</g></svg>
<span class="t" style="left:931.25px;top:127px;font-size:16.8px;line-height:21px;letter-spacing:0.53px;color:#4a4852;">Test Testovich Testov</span>
<span class="t" style="left:931px;top:150px;font-size:14.2px;line-height:18px;letter-spacing:0.333px;color:#9a98a0;">qa и овнер</span>
<div class="pill" style="left:1185.6px;top:127.32px;width:38.8px;height:38.7px;border-radius:50%"></div>
<svg class="i" style="left:1195px;top:137.02px;" width="20" height="20" viewBox="0 0 20 20" fill="none" stroke="#8e8c94" stroke-width="2" stroke-linecap="round" stroke-linejoin="round"><path d="M2.5 6.7h14.8M2.5 13.3h14.8"/></svg>
<div class="pill" style="left:1334.2px;top:132.67px;width:142.5px;height:29.4px;border-radius:14.7px;background:#efeff0"></div>
<span class="t" style="left:1345.35px;top:138px;font-size:15.4px;line-height:19px;letter-spacing:0.296px;color:#8e8c94;">Не заплановано</span>
<svg class="i" style="left:1523px;top:128.07px" width="39.1" height="39.1" viewBox="0 0 40 40"><clipPath id="c5"><circle cx="20" cy="20" r="20"/></clipPath><g clip-path="url(#c5)">
<rect width="40" height="40" fill="#3b2506"/>
<path d="M0 0h26l-8 12-18 8z" fill="#402807"/>
<path d="M30 3l10 5v30l-12 2z" fill="#4a3410"/>
<path d="M34.5 8.5l5.5 2v8.3h-6.5z" fill="#50d6cd"/>
<path d="M32 20.6h8v9l-9 2.4z" fill="#5de6dc"/>
<path d="M36 24l4 4v3l-6-1z" fill="#7af0e6"/>
<path d="M33.3 5.5l2.3 1-5.3 26.5-2.3-.5z" fill="#69731f"/>
<path d="M15 40l4-4 10-2 9-3.5v9.5z" fill="#c6871c"/>
<path d="M7.5 17.5h8v7.5h-8z" fill="#a4175a"/>
<path d="M9.8 19h6.2v5h-6.2z" fill="#1b1b7c"/>
<path d="M0 24.3l14 .6v1.3l-14-.5z" fill="#1f7d79"/>
<path d="M5.5 31.3l8-3.3 4.5 3.8-6 1.2z" fill="#8daa3b"/>
<path d="M14 32.5h9.5l2 4-11 2z" fill="#070a06"/>
<path d="M16.8 13.5l6-1.5 6.5 3 1 7.5-3 8-9 2-5.3-5 2.3-7.5z" fill="#84a5a9"/>
<path d="M18 20l8 2-1.5 7-8-2z" fill="#8fb0b3"/>
<path d="M24.3 3.2l8.3 3.2-3.3 12-9-3.7z" fill="#7ea3a8"/>
<path d="M28.8 1.3l1.7.6-.8 2.5-1.7-.6z" fill="#7ea3a8"/>
<path d="M25.2 4.8l5.7 2.2-1 3.4-5.7-2.2z" fill="#e6df8c"/>
<path d="M23.7 9.6l5.6 2.2-1 3.5-5.6-2.2z" fill="#e6df8c"/>
<path d="M26.8 6.3l1.5.6-.5 1.5-1.5-.6zM25.3 11.2l1.5.6-.5 1.5-1.5-.6z" fill="#5f6b3a"/>
<path d="M12.8 9.2l2.7.5 3.3 4.3-1.8 1.6z" fill="#6f9195"/>
<path d="M11.6 8h3.3v3.2h-3.3z" fill="#274b47"/>
<path d="M27.5 20l3 1 .5 5-2 .5z" fill="#708f93"/>
<path d="M28.3 22.5h2.7v3.2h-2.7z" fill="#5b6a2a"/>
<path d="M13 26.5h2.7l-.3 13.5h-2.7z" fill="#7b9da3"/>
<path d="M18.5 29.5l2.5-1.8 8.2 10.5-2.6 1.5z" fill="#7b9da3"/>
<path d="M24 27.3l2.8.5-.3 2.3-2.8-.5z" fill="#1c3da2"/>
</g></svg>
<span class="t" style="left:1580.75px;top:127px;font-size:16.8px;line-height:21px;letter-spacing:0.54px;color:#4a4852;">Test Testovich Testov</span>
<span class="t" style="left:1580.5px;top:150px;font-size:14.2px;line-height:18px;letter-spacing:0.333px;color:#9a98a0;">qa и овнер</span>
<div class="row" style="top:175.86px"><div class="cb" style="left:15px;top:18.24px"></div></div>
<span class="t" style="left:116.35px;top:194px;font-size:16.8px;line-height:21px;letter-spacing:0px;color:#4a4852;letter-spacing:-.4px;">589</span>
<span class="t" style="left:244.4px;top:194px;font-size:16.8px;line-height:21px;letter-spacing:0.387px;color:#4a4852;">рег 4</span>
<div class="pill" style="left:635.3px;top:190.45px;width:126.1px;height:27.3px"></div>
<svg class="i" style="left:640.9px;top:193.55px;" width="21" height="21" viewBox="0 0 21 21" fill="none" stroke="#8e8c94" stroke-width="1.55" stroke-linecap="round" stroke-linejoin="round"><circle cx="10.5" cy="10.5" r="8.6"/><path d="M10.5 5.8v4.7l3.4 2"/></svg>
<span class="t" style="left:668.45px;top:195px;font-size:14.8px;line-height:18px;letter-spacing:0.015px;color:#9a98a0;">Без терміну</span>
<svg class="i" style="left:873.1px;top:185.25px" width="39.1" height="39.1" viewBox="0 0 40 40"><clipPath id="c6"><circle cx="20" cy="20" r="20"/></clipPath><g clip-path="url(#c6)">
<rect width="40" height="40" fill="#3b2506"/>
<path d="M0 0h26l-8 12-18 8z" fill="#402807"/>
<path d="M30 3l10 5v30l-12 2z" fill="#4a3410"/>
<path d="M34.5 8.5l5.5 2v8.3h-6.5z" fill="#50d6cd"/>
<path d="M32 20.6h8v9l-9 2.4z" fill="#5de6dc"/>
<path d="M36 24l4 4v3l-6-1z" fill="#7af0e6"/>
<path d="M33.3 5.5l2.3 1-5.3 26.5-2.3-.5z" fill="#69731f"/>
<path d="M15 40l4-4 10-2 9-3.5v9.5z" fill="#c6871c"/>
<path d="M7.5 17.5h8v7.5h-8z" fill="#a4175a"/>
<path d="M9.8 19h6.2v5h-6.2z" fill="#1b1b7c"/>
<path d="M0 24.3l14 .6v1.3l-14-.5z" fill="#1f7d79"/>
<path d="M5.5 31.3l8-3.3 4.5 3.8-6 1.2z" fill="#8daa3b"/>
<path d="M14 32.5h9.5l2 4-11 2z" fill="#070a06"/>
<path d="M16.8 13.5l6-1.5 6.5 3 1 7.5-3 8-9 2-5.3-5 2.3-7.5z" fill="#84a5a9"/>
<path d="M18 20l8 2-1.5 7-8-2z" fill="#8fb0b3"/>
<path d="M24.3 3.2l8.3 3.2-3.3 12-9-3.7z" fill="#7ea3a8"/>
<path d="M28.8 1.3l1.7.6-.8 2.5-1.7-.6z" fill="#7ea3a8"/>
<path d="M25.2 4.8l5.7 2.2-1 3.4-5.7-2.2z" fill="#e6df8c"/>
<path d="M23.7 9.6l5.6 2.2-1 3.5-5.6-2.2z" fill="#e6df8c"/>
<path d="M26.8 6.3l1.5.6-.5 1.5-1.5-.6zM25.3 11.2l1.5.6-.5 1.5-1.5-.6z" fill="#5f6b3a"/>
<path d="M12.8 9.2l2.7.5 3.3 4.3-1.8 1.6z" fill="#6f9195"/>
<path d="M11.6 8h3.3v3.2h-3.3z" fill="#274b47"/>
<path d="M27.5 20l3 1 .5 5-2 .5z" fill="#708f93"/>
<path d="M28.3 22.5h2.7v3.2h-2.7z" fill="#5b6a2a"/>
<path d="M13 26.5h2.7l-.3 13.5h-2.7z" fill="#7b9da3"/>
<path d="M18.5 29.5l2.5-1.8 8.2 10.5-2.6 1.5z" fill="#7b9da3"/>
<path d="M24 27.3l2.8.5-.3 2.3-2.8-.5z" fill="#1c3da2"/>
</g></svg>
<span class="t" style="left:931.25px;top:184px;font-size:16.8px;line-height:21px;letter-spacing:0.53px;color:#4a4852;">Test Testovich Testov</span>
<span class="t" style="left:931px;top:207px;font-size:14.2px;line-height:18px;letter-spacing:0.333px;color:#9a98a0;">qa и овнер</span>
<div class="pill" style="left:1185.6px;top:184.5px;width:38.8px;height:38.7px;border-radius:50%"></div>
<svg class="i" style="left:1195px;top:194.2px;" width="20" height="20" viewBox="0 0 20 20" fill="none" stroke="#8e8c94" stroke-width="2" stroke-linecap="round" stroke-linejoin="round"><path d="M2.5 6.7h14.8M2.5 13.3h14.8"/></svg>
<div class="pill" style="left:1334.2px;top:189.85px;width:142.5px;height:29.4px;border-radius:14.7px;background:#efeff0"></div>
<span class="t" style="left:1345.35px;top:195px;font-size:15.4px;line-height:19px;letter-spacing:0.296px;color:#8e8c94;">Не заплановано</span>
<svg class="i" style="left:1523px;top:185.25px" width="39.1" height="39.1" viewBox="0 0 40 40"><clipPath id="c7"><circle cx="20" cy="20" r="20"/></clipPath><g clip-path="url(#c7)">
<rect width="40" height="40" fill="#3b2506"/>
<path d="M0 0h26l-8 12-18 8z" fill="#402807"/>
<path d="M30 3l10 5v30l-12 2z" fill="#4a3410"/>
<path d="M34.5 8.5l5.5 2v8.3h-6.5z" fill="#50d6cd"/>
<path d="M32 20.6h8v9l-9 2.4z" fill="#5de6dc"/>
<path d="M36 24l4 4v3l-6-1z" fill="#7af0e6"/>
<path d="M33.3 5.5l2.3 1-5.3 26.5-2.3-.5z" fill="#69731f"/>
<path d="M15 40l4-4 10-2 9-3.5v9.5z" fill="#c6871c"/>
<path d="M7.5 17.5h8v7.5h-8z" fill="#a4175a"/>
<path d="M9.8 19h6.2v5h-6.2z" fill="#1b1b7c"/>
<path d="M0 24.3l14 .6v1.3l-14-.5z" fill="#1f7d79"/>
<path d="M5.5 31.3l8-3.3 4.5 3.8-6 1.2z" fill="#8daa3b"/>
<path d="M14 32.5h9.5l2 4-11 2z" fill="#070a06"/>
<path d="M16.8 13.5l6-1.5 6.5 3 1 7.5-3 8-9 2-5.3-5 2.3-7.5z" fill="#84a5a9"/>
<path d="M18 20l8 2-1.5 7-8-2z" fill="#8fb0b3"/>
<path d="M24.3 3.2l8.3 3.2-3.3 12-9-3.7z" fill="#7ea3a8"/>
<path d="M28.8 1.3l1.7.6-.8 2.5-1.7-.6z" fill="#7ea3a8"/>
<path d="M25.2 4.8l5.7 2.2-1 3.4-5.7-2.2z" fill="#e6df8c"/>
<path d="M23.7 9.6l5.6 2.2-1 3.5-5.6-2.2z" fill="#e6df8c"/>
<path d="M26.8 6.3l1.5.6-.5 1.5-1.5-.6zM25.3 11.2l1.5.6-.5 1.5-1.5-.6z" fill="#5f6b3a"/>
<path d="M12.8 9.2l2.7.5 3.3 4.3-1.8 1.6z" fill="#6f9195"/>
<path d="M11.6 8h3.3v3.2h-3.3z" fill="#274b47"/>
<path d="M27.5 20l3 1 .5 5-2 .5z" fill="#708f93"/>
<path d="M28.3 22.5h2.7v3.2h-2.7z" fill="#5b6a2a"/>
<path d="M13 26.5h2.7l-.3 13.5h-2.7z" fill="#7b9da3"/>
<path d="M18.5 29.5l2.5-1.8 8.2 10.5-2.6 1.5z" fill="#7b9da3"/>
<path d="M24 27.3l2.8.5-.3 2.3-2.8-.5z" fill="#1c3da2"/>
</g></svg>
<span class="t" style="left:1580.75px;top:184px;font-size:16.8px;line-height:21px;letter-spacing:0.54px;color:#4a4852;">Test Testovich Testov</span>
<span class="t" style="left:1580.5px;top:207px;font-size:14.2px;line-height:18px;letter-spacing:0.333px;color:#9a98a0;">qa и овнер</span>
<div class="row" style="top:233.04px"><div class="cb" style="left:15px;top:18.24px"></div></div>
<span class="t" style="left:116.35px;top:251px;font-size:16.8px;line-height:21px;letter-spacing:0px;color:#4a4852;letter-spacing:-.4px;">588</span>
<span class="t" style="left:244.4px;top:251px;font-size:16.8px;line-height:21px;letter-spacing:0.45px;color:#4a4852;">рег 5</span>
<div class="pill" style="left:635.3px;top:247.63px;width:126.1px;height:27.3px"></div>
<svg class="i" style="left:640.9px;top:250.73px;" width="21" height="21" viewBox="0 0 21 21" fill="none" stroke="#8e8c94" stroke-width="1.55" stroke-linecap="round" stroke-linejoin="round"><circle cx="10.5" cy="10.5" r="8.6"/><path d="M10.5 5.8v4.7l3.4 2"/></svg>
<span class="t" style="left:668.45px;top:252px;font-size:14.8px;line-height:18px;letter-spacing:0.015px;color:#9a98a0;">Без терміну</span>
<svg class="i" style="left:873.1px;top:242.43px" width="39.1" height="39.1" viewBox="0 0 40 40"><clipPath id="c8"><circle cx="20" cy="20" r="20"/></clipPath><g clip-path="url(#c8)">
<rect width="40" height="40" fill="#3b2506"/>
<path d="M0 0h26l-8 12-18 8z" fill="#402807"/>
<path d="M30 3l10 5v30l-12 2z" fill="#4a3410"/>
<path d="M34.5 8.5l5.5 2v8.3h-6.5z" fill="#50d6cd"/>
<path d="M32 20.6h8v9l-9 2.4z" fill="#5de6dc"/>
<path d="M36 24l4 4v3l-6-1z" fill="#7af0e6"/>
<path d="M33.3 5.5l2.3 1-5.3 26.5-2.3-.5z" fill="#69731f"/>
<path d="M15 40l4-4 10-2 9-3.5v9.5z" fill="#c6871c"/>
<path d="M7.5 17.5h8v7.5h-8z" fill="#a4175a"/>
<path d="M9.8 19h6.2v5h-6.2z" fill="#1b1b7c"/>
<path d="M0 24.3l14 .6v1.3l-14-.5z" fill="#1f7d79"/>
<path d="M5.5 31.3l8-3.3 4.5 3.8-6 1.2z" fill="#8daa3b"/>
<path d="M14 32.5h9.5l2 4-11 2z" fill="#070a06"/>
<path d="M16.8 13.5l6-1.5 6.5 3 1 7.5-3 8-9 2-5.3-5 2.3-7.5z" fill="#84a5a9"/>
<path d="M18 20l8 2-1.5 7-8-2z" fill="#8fb0b3"/>
<path d="M24.3 3.2l8.3 3.2-3.3 12-9-3.7z" fill="#7ea3a8"/>
<path d="M28.8 1.3l1.7.6-.8 2.5-1.7-.6z" fill="#7ea3a8"/>
<path d="M25.2 4.8l5.7 2.2-1 3.4-5.7-2.2z" fill="#e6df8c"/>
<path d="M23.7 9.6l5.6 2.2-1 3.5-5.6-2.2z" fill="#e6df8c"/>
<path d="M26.8 6.3l1.5.6-.5 1.5-1.5-.6zM25.3 11.2l1.5.6-.5 1.5-1.5-.6z" fill="#5f6b3a"/>
<path d="M12.8 9.2l2.7.5 3.3 4.3-1.8 1.6z" fill="#6f9195"/>
<path d="M11.6 8h3.3v3.2h-3.3z" fill="#274b47"/>
<path d="M27.5 20l3 1 .5 5-2 .5z" fill="#708f93"/>
<path d="M28.3 22.5h2.7v3.2h-2.7z" fill="#5b6a2a"/>
<path d="M13 26.5h2.7l-.3 13.5h-2.7z" fill="#7b9da3"/>
<path d="M18.5 29.5l2.5-1.8 8.2 10.5-2.6 1.5z" fill="#7b9da3"/>
<path d="M24 27.3l2.8.5-.3 2.3-2.8-.5z" fill="#1c3da2"/>
</g></svg>
<span class="t" style="left:931.25px;top:241px;font-size:16.8px;line-height:21px;letter-spacing:0.53px;color:#4a4852;">Test Testovich Testov</span>
<span class="t" style="left:931px;top:264px;font-size:14.2px;line-height:18px;letter-spacing:0.333px;color:#9a98a0;">qa и овнер</span>
<div class="pill" style="left:1185.6px;top:241.68px;width:38.8px;height:38.7px;border-radius:50%"></div>
<svg class="i" style="left:1195px;top:251.38px;" width="20" height="20" viewBox="0 0 20 20" fill="none" stroke="#8e8c94" stroke-width="2" stroke-linecap="round" stroke-linejoin="round"><path d="M2.5 6.7h14.8M2.5 13.3h14.8"/></svg>
<div class="pill" style="left:1334.2px;top:247.03px;width:142.5px;height:29.4px;border-radius:14.7px;background:#efeff0"></div>
<span class="t" style="left:1345.35px;top:252px;font-size:15.4px;line-height:19px;letter-spacing:0.296px;color:#8e8c94;">Не заплановано</span>
<svg class="i" style="left:1523px;top:242.43px" width="39.1" height="39.1" viewBox="0 0 40 40"><clipPath id="c9"><circle cx="20" cy="20" r="20"/></clipPath><g clip-path="url(#c9)">
<rect width="40" height="40" fill="#3b2506"/>
<path d="M0 0h26l-8 12-18 8z" fill="#402807"/>
<path d="M30 3l10 5v30l-12 2z" fill="#4a3410"/>
<path d="M34.5 8.5l5.5 2v8.3h-6.5z" fill="#50d6cd"/>
<path d="M32 20.6h8v9l-9 2.4z" fill="#5de6dc"/>
<path d="M36 24l4 4v3l-6-1z" fill="#7af0e6"/>
<path d="M33.3 5.5l2.3 1-5.3 26.5-2.3-.5z" fill="#69731f"/>
<path d="M15 40l4-4 10-2 9-3.5v9.5z" fill="#c6871c"/>
<path d="M7.5 17.5h8v7.5h-8z" fill="#a4175a"/>
<path d="M9.8 19h6.2v5h-6.2z" fill="#1b1b7c"/>
<path d="M0 24.3l14 .6v1.3l-14-.5z" fill="#1f7d79"/>
<path d="M5.5 31.3l8-3.3 4.5 3.8-6 1.2z" fill="#8daa3b"/>
<path d="M14 32.5h9.5l2 4-11 2z" fill="#070a06"/>
<path d="M16.8 13.5l6-1.5 6.5 3 1 7.5-3 8-9 2-5.3-5 2.3-7.5z" fill="#84a5a9"/>
<path d="M18 20l8 2-1.5 7-8-2z" fill="#8fb0b3"/>
<path d="M24.3 3.2l8.3 3.2-3.3 12-9-3.7z" fill="#7ea3a8"/>
<path d="M28.8 1.3l1.7.6-.8 2.5-1.7-.6z" fill="#7ea3a8"/>
<path d="M25.2 4.8l5.7 2.2-1 3.4-5.7-2.2z" fill="#e6df8c"/>
<path d="M23.7 9.6l5.6 2.2-1 3.5-5.6-2.2z" fill="#e6df8c"/>
<path d="M26.8 6.3l1.5.6-.5 1.5-1.5-.6zM25.3 11.2l1.5.6-.5 1.5-1.5-.6z" fill="#5f6b3a"/>
<path d="M12.8 9.2l2.7.5 3.3 4.3-1.8 1.6z" fill="#6f9195"/>
<path d="M11.6 8h3.3v3.2h-3.3z" fill="#274b47"/>
<path d="M27.5 20l3 1 .5 5-2 .5z" fill="#708f93"/>
<path d="M28.3 22.5h2.7v3.2h-2.7z" fill="#5b6a2a"/>
<path d="M13 26.5h2.7l-.3 13.5h-2.7z" fill="#7b9da3"/>
<path d="M18.5 29.5l2.5-1.8 8.2 10.5-2.6 1.5z" fill="#7b9da3"/>
<path d="M24 27.3l2.8.5-.3 2.3-2.8-.5z" fill="#1c3da2"/>
</g></svg>
<span class="t" style="left:1580.75px;top:241px;font-size:16.8px;line-height:21px;letter-spacing:0.54px;color:#4a4852;">Test Testovich Testov</span>
<span class="t" style="left:1580.5px;top:264px;font-size:14.2px;line-height:18px;letter-spacing:0.333px;color:#9a98a0;">qa и овнер</span>
<div class="row" style="top:290.22px"><div class="cb" style="left:15px;top:18.24px"></div></div>
<span class="t" style="left:116.35px;top:308px;font-size:16.8px;line-height:21px;letter-spacing:0px;color:#4a4852;letter-spacing:-.4px;">587</span>
<span class="t" style="left:244.4px;top:308px;font-size:16.8px;line-height:21px;letter-spacing:0.45px;color:#4a4852;">рег 6</span>
<div class="pill" style="left:635.3px;top:304.81px;width:126.1px;height:27.3px"></div>
<svg class="i" style="left:640.9px;top:307.91px;" width="21" height="21" viewBox="0 0 21 21" fill="none" stroke="#8e8c94" stroke-width="1.55" stroke-linecap="round" stroke-linejoin="round"><circle cx="10.5" cy="10.5" r="8.6"/><path d="M10.5 5.8v4.7l3.4 2"/></svg>
<span class="t" style="left:668.45px;top:309px;font-size:14.8px;line-height:18px;letter-spacing:0.015px;color:#9a98a0;">Без терміну</span>
<svg class="i" style="left:873.1px;top:299.61px" width="39.1" height="39.1" viewBox="0 0 40 40"><clipPath id="c10"><circle cx="20" cy="20" r="20"/></clipPath><g clip-path="url(#c10)">
<rect width="40" height="40" fill="#3b2506"/>
<path d="M0 0h26l-8 12-18 8z" fill="#402807"/>
<path d="M30 3l10 5v30l-12 2z" fill="#4a3410"/>
<path d="M34.5 8.5l5.5 2v8.3h-6.5z" fill="#50d6cd"/>
<path d="M32 20.6h8v9l-9 2.4z" fill="#5de6dc"/>
<path d="M36 24l4 4v3l-6-1z" fill="#7af0e6"/>
<path d="M33.3 5.5l2.3 1-5.3 26.5-2.3-.5z" fill="#69731f"/>
<path d="M15 40l4-4 10-2 9-3.5v9.5z" fill="#c6871c"/>
<path d="M7.5 17.5h8v7.5h-8z" fill="#a4175a"/>
<path d="M9.8 19h6.2v5h-6.2z" fill="#1b1b7c"/>
<path d="M0 24.3l14 .6v1.3l-14-.5z" fill="#1f7d79"/>
<path d="M5.5 31.3l8-3.3 4.5 3.8-6 1.2z" fill="#8daa3b"/>
<path d="M14 32.5h9.5l2 4-11 2z" fill="#070a06"/>
<path d="M16.8 13.5l6-1.5 6.5 3 1 7.5-3 8-9 2-5.3-5 2.3-7.5z" fill="#84a5a9"/>
<path d="M18 20l8 2-1.5 7-8-2z" fill="#8fb0b3"/>
<path d="M24.3 3.2l8.3 3.2-3.3 12-9-3.7z" fill="#7ea3a8"/>
<path d="M28.8 1.3l1.7.6-.8 2.5-1.7-.6z" fill="#7ea3a8"/>
<path d="M25.2 4.8l5.7 2.2-1 3.4-5.7-2.2z" fill="#e6df8c"/>
<path d="M23.7 9.6l5.6 2.2-1 3.5-5.6-2.2z" fill="#e6df8c"/>
<path d="M26.8 6.3l1.5.6-.5 1.5-1.5-.6zM25.3 11.2l1.5.6-.5 1.5-1.5-.6z" fill="#5f6b3a"/>
<path d="M12.8 9.2l2.7.5 3.3 4.3-1.8 1.6z" fill="#6f9195"/>
<path d="M11.6 8h3.3v3.2h-3.3z" fill="#274b47"/>
<path d="M27.5 20l3 1 .5 5-2 .5z" fill="#708f93"/>
<path d="M28.3 22.5h2.7v3.2h-2.7z" fill="#5b6a2a"/>
<path d="M13 26.5h2.7l-.3 13.5h-2.7z" fill="#7b9da3"/>
<path d="M18.5 29.5l2.5-1.8 8.2 10.5-2.6 1.5z" fill="#7b9da3"/>
<path d="M24 27.3l2.8.5-.3 2.3-2.8-.5z" fill="#1c3da2"/>
</g></svg>
<span class="t" style="left:931.25px;top:299px;font-size:16.8px;line-height:21px;letter-spacing:0.53px;color:#4a4852;">Test Testovich Testov</span>
<span class="t" style="left:931px;top:322px;font-size:14.2px;line-height:18px;letter-spacing:0.333px;color:#9a98a0;">qa и овнер</span>
<div class="pill" style="left:1185.6px;top:298.86px;width:38.8px;height:38.7px;border-radius:50%"></div>
<svg class="i" style="left:1195px;top:308.56px;" width="20" height="20" viewBox="0 0 20 20" fill="none" stroke="#8e8c94" stroke-width="2" stroke-linecap="round" stroke-linejoin="round"><path d="M2.5 6.7h14.8M2.5 13.3h14.8"/></svg>
<div class="pill" style="left:1334.2px;top:304.21px;width:142.5px;height:29.4px;border-radius:14.7px;background:#efeff0"></div>
<span class="t" style="left:1345.35px;top:309px;font-size:15.4px;line-height:19px;letter-spacing:0.296px;color:#8e8c94;">Не заплановано</span>
<svg class="i" style="left:1523px;top:299.61px" width="39.1" height="39.1" viewBox="0 0 40 40"><clipPath id="c11"><circle cx="20" cy="20" r="20"/></clipPath><g clip-path="url(#c11)">
<rect width="40" height="40" fill="#3b2506"/>
<path d="M0 0h26l-8 12-18 8z" fill="#402807"/>
<path d="M30 3l10 5v30l-12 2z" fill="#4a3410"/>
<path d="M34.5 8.5l5.5 2v8.3h-6.5z" fill="#50d6cd"/>
<path d="M32 20.6h8v9l-9 2.4z" fill="#5de6dc"/>
<path d="M36 24l4 4v3l-6-1z" fill="#7af0e6"/>
<path d="M33.3 5.5l2.3 1-5.3 26.5-2.3-.5z" fill="#69731f"/>
<path d="M15 40l4-4 10-2 9-3.5v9.5z" fill="#c6871c"/>
<path d="M7.5 17.5h8v7.5h-8z" fill="#a4175a"/>
<path d="M9.8 19h6.2v5h-6.2z" fill="#1b1b7c"/>
<path d="M0 24.3l14 .6v1.3l-14-.5z" fill="#1f7d79"/>
<path d="M5.5 31.3l8-3.3 4.5 3.8-6 1.2z" fill="#8daa3b"/>
<path d="M14 32.5h9.5l2 4-11 2z" fill="#070a06"/>
<path d="M16.8 13.5l6-1.5 6.5 3 1 7.5-3 8-9 2-5.3-5 2.3-7.5z" fill="#84a5a9"/>
<path d="M18 20l8 2-1.5 7-8-2z" fill="#8fb0b3"/>
<path d="M24.3 3.2l8.3 3.2-3.3 12-9-3.7z" fill="#7ea3a8"/>
<path d="M28.8 1.3l1.7.6-.8 2.5-1.7-.6z" fill="#7ea3a8"/>
<path d="M25.2 4.8l5.7 2.2-1 3.4-5.7-2.2z" fill="#e6df8c"/>
<path d="M23.7 9.6l5.6 2.2-1 3.5-5.6-2.2z" fill="#e6df8c"/>
<path d="M26.8 6.3l1.5.6-.5 1.5-1.5-.6zM25.3 11.2l1.5.6-.5 1.5-1.5-.6z" fill="#5f6b3a"/>
<path d="M12.8 9.2l2.7.5 3.3 4.3-1.8 1.6z" fill="#6f9195"/>
<path d="M11.6 8h3.3v3.2h-3.3z" fill="#274b47"/>
<path d="M27.5 20l3 1 .5 5-2 .5z" fill="#708f93"/>
<path d="M28.3 22.5h2.7v3.2h-2.7z" fill="#5b6a2a"/>
<path d="M13 26.5h2.7l-.3 13.5h-2.7z" fill="#7b9da3"/>
<path d="M18.5 29.5l2.5-1.8 8.2 10.5-2.6 1.5z" fill="#7b9da3"/>
<path d="M24 27.3l2.8.5-.3 2.3-2.8-.5z" fill="#1c3da2"/>
</g></svg>
<span class="t" style="left:1580.75px;top:299px;font-size:16.8px;line-height:21px;letter-spacing:0.54px;color:#4a4852;">Test Testovich Testov</span>
<span class="t" style="left:1580.5px;top:322px;font-size:14.2px;line-height:18px;letter-spacing:0.333px;color:#9a98a0;">qa и овнер</span>
<div class="row" style="top:347.4px"><div class="cb" style="left:15px;top:18.24px"></div></div>
<span class="t" style="left:116.35px;top:365px;font-size:16.8px;line-height:21px;letter-spacing:0px;color:#4a4852;letter-spacing:-.4px;">586</span>
<span class="t" style="left:244.4px;top:365px;font-size:16.8px;line-height:21px;letter-spacing:0.45px;color:#4a4852;">рег 7</span>
<div class="pill" style="left:635.3px;top:361.99px;width:126.1px;height:27.3px"></div>
<svg class="i" style="left:640.9px;top:365.09px;" width="21" height="21" viewBox="0 0 21 21" fill="none" stroke="#8e8c94" stroke-width="1.55" stroke-linecap="round" stroke-linejoin="round"><circle cx="10.5" cy="10.5" r="8.6"/><path d="M10.5 5.8v4.7l3.4 2"/></svg>
<span class="t" style="left:668.45px;top:366px;font-size:14.8px;line-height:18px;letter-spacing:0.015px;color:#9a98a0;">Без терміну</span>
<svg class="i" style="left:873.1px;top:356.79px" width="39.1" height="39.1" viewBox="0 0 40 40"><clipPath id="c12"><circle cx="20" cy="20" r="20"/></clipPath><g clip-path="url(#c12)">
<rect width="40" height="40" fill="#3b2506"/>
<path d="M0 0h26l-8 12-18 8z" fill="#402807"/>
<path d="M30 3l10 5v30l-12 2z" fill="#4a3410"/>
<path d="M34.5 8.5l5.5 2v8.3h-6.5z" fill="#50d6cd"/>
<path d="M32 20.6h8v9l-9 2.4z" fill="#5de6dc"/>
<path d="M36 24l4 4v3l-6-1z" fill="#7af0e6"/>
<path d="M33.3 5.5l2.3 1-5.3 26.5-2.3-.5z" fill="#69731f"/>
<path d="M15 40l4-4 10-2 9-3.5v9.5z" fill="#c6871c"/>
<path d="M7.5 17.5h8v7.5h-8z" fill="#a4175a"/>
<path d="M9.8 19h6.2v5h-6.2z" fill="#1b1b7c"/>
<path d="M0 24.3l14 .6v1.3l-14-.5z" fill="#1f7d79"/>
<path d="M5.5 31.3l8-3.3 4.5 3.8-6 1.2z" fill="#8daa3b"/>
<path d="M14 32.5h9.5l2 4-11 2z" fill="#070a06"/>
<path d="M16.8 13.5l6-1.5 6.5 3 1 7.5-3 8-9 2-5.3-5 2.3-7.5z" fill="#84a5a9"/>
<path d="M18 20l8 2-1.5 7-8-2z" fill="#8fb0b3"/>
<path d="M24.3 3.2l8.3 3.2-3.3 12-9-3.7z" fill="#7ea3a8"/>
<path d="M28.8 1.3l1.7.6-.8 2.5-1.7-.6z" fill="#7ea3a8"/>
<path d="M25.2 4.8l5.7 2.2-1 3.4-5.7-2.2z" fill="#e6df8c"/>
<path d="M23.7 9.6l5.6 2.2-1 3.5-5.6-2.2z" fill="#e6df8c"/>
<path d="M26.8 6.3l1.5.6-.5 1.5-1.5-.6zM25.3 11.2l1.5.6-.5 1.5-1.5-.6z" fill="#5f6b3a"/>
<path d="M12.8 9.2l2.7.5 3.3 4.3-1.8 1.6z" fill="#6f9195"/>
<path d="M11.6 8h3.3v3.2h-3.3z" fill="#274b47"/>
<path d="M27.5 20l3 1 .5 5-2 .5z" fill="#708f93"/>
<path d="M28.3 22.5h2.7v3.2h-2.7z" fill="#5b6a2a"/>
<path d="M13 26.5h2.7l-.3 13.5h-2.7z" fill="#7b9da3"/>
<path d="M18.5 29.5l2.5-1.8 8.2 10.5-2.6 1.5z" fill="#7b9da3"/>
<path d="M24 27.3l2.8.5-.3 2.3-2.8-.5z" fill="#1c3da2"/>
</g></svg>
<span class="t" style="left:931.25px;top:356px;font-size:16.8px;line-height:21px;letter-spacing:0.53px;color:#4a4852;">Test Testovich Testov</span>
<span class="t" style="left:931px;top:379px;font-size:14.2px;line-height:18px;letter-spacing:0.333px;color:#9a98a0;">qa и овнер</span>
<div class="pill" style="left:1185.6px;top:356.04px;width:38.8px;height:38.7px;border-radius:50%"></div>
<svg class="i" style="left:1195px;top:365.74px;" width="20" height="20" viewBox="0 0 20 20" fill="none" stroke="#8e8c94" stroke-width="2" stroke-linecap="round" stroke-linejoin="round"><path d="M2.5 6.7h14.8M2.5 13.3h14.8"/></svg>
<div class="pill" style="left:1334.2px;top:361.39px;width:142.5px;height:29.4px;border-radius:14.7px;background:#efeff0"></div>
<span class="t" style="left:1345.35px;top:366px;font-size:15.4px;line-height:19px;letter-spacing:0.296px;color:#8e8c94;">Не заплановано</span>
<svg class="i" style="left:1523px;top:356.79px" width="39.1" height="39.1" viewBox="0 0 40 40"><clipPath id="c13"><circle cx="20" cy="20" r="20"/></clipPath><g clip-path="url(#c13)">
<rect width="40" height="40" fill="#3b2506"/>
<path d="M0 0h26l-8 12-18 8z" fill="#402807"/>
<path d="M30 3l10 5v30l-12 2z" fill="#4a3410"/>
<path d="M34.5 8.5l5.5 2v8.3h-6.5z" fill="#50d6cd"/>
<path d="M32 20.6h8v9l-9 2.4z" fill="#5de6dc"/>
<path d="M36 24l4 4v3l-6-1z" fill="#7af0e6"/>
<path d="M33.3 5.5l2.3 1-5.3 26.5-2.3-.5z" fill="#69731f"/>
<path d="M15 40l4-4 10-2 9-3.5v9.5z" fill="#c6871c"/>
<path d="M7.5 17.5h8v7.5h-8z" fill="#a4175a"/>
<path d="M9.8 19h6.2v5h-6.2z" fill="#1b1b7c"/>
<path d="M0 24.3l14 .6v1.3l-14-.5z" fill="#1f7d79"/>
<path d="M5.5 31.3l8-3.3 4.5 3.8-6 1.2z" fill="#8daa3b"/>
<path d="M14 32.5h9.5l2 4-11 2z" fill="#070a06"/>
<path d="M16.8 13.5l6-1.5 6.5 3 1 7.5-3 8-9 2-5.3-5 2.3-7.5z" fill="#84a5a9"/>
<path d="M18 20l8 2-1.5 7-8-2z" fill="#8fb0b3"/>
<path d="M24.3 3.2l8.3 3.2-3.3 12-9-3.7z" fill="#7ea3a8"/>
<path d="M28.8 1.3l1.7.6-.8 2.5-1.7-.6z" fill="#7ea3a8"/>
<path d="M25.2 4.8l5.7 2.2-1 3.4-5.7-2.2z" fill="#e6df8c"/>
<path d="M23.7 9.6l5.6 2.2-1 3.5-5.6-2.2z" fill="#e6df8c"/>
<path d="M26.8 6.3l1.5.6-.5 1.5-1.5-.6zM25.3 11.2l1.5.6-.5 1.5-1.5-.6z" fill="#5f6b3a"/>
<path d="M12.8 9.2l2.7.5 3.3 4.3-1.8 1.6z" fill="#6f9195"/>
<path d="M11.6 8h3.3v3.2h-3.3z" fill="#274b47"/>
<path d="M27.5 20l3 1 .5 5-2 .5z" fill="#708f93"/>
<path d="M28.3 22.5h2.7v3.2h-2.7z" fill="#5b6a2a"/>
<path d="M13 26.5h2.7l-.3 13.5h-2.7z" fill="#7b9da3"/>
<path d="M18.5 29.5l2.5-1.8 8.2 10.5-2.6 1.5z" fill="#7b9da3"/>
<path d="M24 27.3l2.8.5-.3 2.3-2.8-.5z" fill="#1c3da2"/>
</g></svg>
<span class="t" style="left:1580.75px;top:356px;font-size:16.8px;line-height:21px;letter-spacing:0.54px;color:#4a4852;">Test Testovich Testov</span>
<span class="t" style="left:1580.5px;top:379px;font-size:14.2px;line-height:18px;letter-spacing:0.333px;color:#9a98a0;">qa и овнер</span>
<div class="row" style="top:404.58px"><div class="cb" style="left:15px;top:18.24px"></div></div>
<span class="t" style="left:116.35px;top:423px;font-size:16.8px;line-height:21px;letter-spacing:0px;color:#4a4852;letter-spacing:-.4px;">585</span>
<span class="t" style="left:244.4px;top:423px;font-size:16.8px;line-height:21px;letter-spacing:0.45px;color:#4a4852;">рег 8</span>
<div class="pill" style="left:635.3px;top:419.17px;width:126.1px;height:27.3px"></div>
<svg class="i" style="left:640.9px;top:422.27px;" width="21" height="21" viewBox="0 0 21 21" fill="none" stroke="#8e8c94" stroke-width="1.55" stroke-linecap="round" stroke-linejoin="round"><circle cx="10.5" cy="10.5" r="8.6"/><path d="M10.5 5.8v4.7l3.4 2"/></svg>
<span class="t" style="left:668.45px;top:423px;font-size:14.8px;line-height:18px;letter-spacing:0.015px;color:#9a98a0;">Без терміну</span>
<svg class="i" style="left:873.1px;top:413.97px" width="39.1" height="39.1" viewBox="0 0 40 40"><clipPath id="c14"><circle cx="20" cy="20" r="20"/></clipPath><g clip-path="url(#c14)">
<rect width="40" height="40" fill="#3b2506"/>
<path d="M0 0h26l-8 12-18 8z" fill="#402807"/>
<path d="M30 3l10 5v30l-12 2z" fill="#4a3410"/>
<path d="M34.5 8.5l5.5 2v8.3h-6.5z" fill="#50d6cd"/>
<path d="M32 20.6h8v9l-9 2.4z" fill="#5de6dc"/>
<path d="M36 24l4 4v3l-6-1z" fill="#7af0e6"/>
<path d="M33.3 5.5l2.3 1-5.3 26.5-2.3-.5z" fill="#69731f"/>
<path d="M15 40l4-4 10-2 9-3.5v9.5z" fill="#c6871c"/>
<path d="M7.5 17.5h8v7.5h-8z" fill="#a4175a"/>
<path d="M9.8 19h6.2v5h-6.2z" fill="#1b1b7c"/>
<path d="M0 24.3l14 .6v1.3l-14-.5z" fill="#1f7d79"/>
<path d="M5.5 31.3l8-3.3 4.5 3.8-6 1.2z" fill="#8daa3b"/>
<path d="M14 32.5h9.5l2 4-11 2z" fill="#070a06"/>
<path d="M16.8 13.5l6-1.5 6.5 3 1 7.5-3 8-9 2-5.3-5 2.3-7.5z" fill="#84a5a9"/>
<path d="M18 20l8 2-1.5 7-8-2z" fill="#8fb0b3"/>
<path d="M24.3 3.2l8.3 3.2-3.3 12-9-3.7z" fill="#7ea3a8"/>
<path d="M28.8 1.3l1.7.6-.8 2.5-1.7-.6z" fill="#7ea3a8"/>
<path d="M25.2 4.8l5.7 2.2-1 3.4-5.7-2.2z" fill="#e6df8c"/>
<path d="M23.7 9.6l5.6 2.2-1 3.5-5.6-2.2z" fill="#e6df8c"/>
<path d="M26.8 6.3l1.5.6-.5 1.5-1.5-.6zM25.3 11.2l1.5.6-.5 1.5-1.5-.6z" fill="#5f6b3a"/>
<path d="M12.8 9.2l2.7.5 3.3 4.3-1.8 1.6z" fill="#6f9195"/>
<path d="M11.6 8h3.3v3.2h-3.3z" fill="#274b47"/>
<path d="M27.5 20l3 1 .5 5-2 .5z" fill="#708f93"/>
<path d="M28.3 22.5h2.7v3.2h-2.7z" fill="#5b6a2a"/>
<path d="M13 26.5h2.7l-.3 13.5h-2.7z" fill="#7b9da3"/>
<path d="M18.5 29.5l2.5-1.8 8.2 10.5-2.6 1.5z" fill="#7b9da3"/>
<path d="M24 27.3l2.8.5-.3 2.3-2.8-.5z" fill="#1c3da2"/>
</g></svg>
<span class="t" style="left:931.25px;top:413px;font-size:16.8px;line-height:21px;letter-spacing:0.53px;color:#4a4852;">Test Testovich Testov</span>
<span class="t" style="left:931px;top:436px;font-size:14.2px;line-height:18px;letter-spacing:0.333px;color:#9a98a0;">qa и овнер</span>
<div class="pill" style="left:1185.6px;top:413.22px;width:38.8px;height:38.7px;border-radius:50%"></div>
<svg class="i" style="left:1195px;top:422.92px;" width="20" height="20" viewBox="0 0 20 20" fill="none" stroke="#8e8c94" stroke-width="2" stroke-linecap="round" stroke-linejoin="round"><path d="M2.5 6.7h14.8M2.5 13.3h14.8"/></svg>
<div class="pill" style="left:1334.2px;top:418.57px;width:142.5px;height:29.4px;border-radius:14.7px;background:#efeff0"></div>
<span class="t" style="left:1345.35px;top:424px;font-size:15.4px;line-height:19px;letter-spacing:0.296px;color:#8e8c94;">Не заплановано</span>
<svg class="i" style="left:1523px;top:413.97px" width="39.1" height="39.1" viewBox="0 0 40 40"><clipPath id="c15"><circle cx="20" cy="20" r="20"/></clipPath><g clip-path="url(#c15)">
<rect width="40" height="40" fill="#3b2506"/>
<path d="M0 0h26l-8 12-18 8z" fill="#402807"/>
<path d="M30 3l10 5v30l-12 2z" fill="#4a3410"/>
<path d="M34.5 8.5l5.5 2v8.3h-6.5z" fill="#50d6cd"/>
<path d="M32 20.6h8v9l-9 2.4z" fill="#5de6dc"/>
<path d="M36 24l4 4v3l-6-1z" fill="#7af0e6"/>
<path d="M33.3 5.5l2.3 1-5.3 26.5-2.3-.5z" fill="#69731f"/>
<path d="M15 40l4-4 10-2 9-3.5v9.5z" fill="#c6871c"/>
<path d="M7.5 17.5h8v7.5h-8z" fill="#a4175a"/>
<path d="M9.8 19h6.2v5h-6.2z" fill="#1b1b7c"/>
<path d="M0 24.3l14 .6v1.3l-14-.5z" fill="#1f7d79"/>
<path d="M5.5 31.3l8-3.3 4.5 3.8-6 1.2z" fill="#8daa3b"/>
<path d="M14 32.5h9.5l2 4-11 2z" fill="#070a06"/>
<path d="M16.8 13.5l6-1.5 6.5 3 1 7.5-3 8-9 2-5.3-5 2.3-7.5z" fill="#84a5a9"/>
<path d="M18 20l8 2-1.5 7-8-2z" fill="#8fb0b3"/>
<path d="M24.3 3.2l8.3 3.2-3.3 12-9-3.7z" fill="#7ea3a8"/>
<path d="M28.8 1.3l1.7.6-.8 2.5-1.7-.6z" fill="#7ea3a8"/>
<path d="M25.2 4.8l5.7 2.2-1 3.4-5.7-2.2z" fill="#e6df8c"/>
<path d="M23.7 9.6l5.6 2.2-1 3.5-5.6-2.2z" fill="#e6df8c"/>
<path d="M26.8 6.3l1.5.6-.5 1.5-1.5-.6zM25.3 11.2l1.5.6-.5 1.5-1.5-.6z" fill="#5f6b3a"/>
<path d="M12.8 9.2l2.7.5 3.3 4.3-1.8 1.6z" fill="#6f9195"/>
<path d="M11.6 8h3.3v3.2h-3.3z" fill="#274b47"/>
<path d="M27.5 20l3 1 .5 5-2 .5z" fill="#708f93"/>
<path d="M28.3 22.5h2.7v3.2h-2.7z" fill="#5b6a2a"/>
<path d="M13 26.5h2.7l-.3 13.5h-2.7z" fill="#7b9da3"/>
<path d="M18.5 29.5l2.5-1.8 8.2 10.5-2.6 1.5z" fill="#7b9da3"/>
<path d="M24 27.3l2.8.5-.3 2.3-2.8-.5z" fill="#1c3da2"/>
</g></svg>
<span class="t" style="left:1580.75px;top:413px;font-size:16.8px;line-height:21px;letter-spacing:0.54px;color:#4a4852;">Test Testovich Testov</span>
<span class="t" style="left:1580.5px;top:436px;font-size:14.2px;line-height:18px;letter-spacing:0.333px;color:#9a98a0;">qa и овнер</span>
<div class="row" style="top:461.76px"><div class="cb" style="left:15px;top:18.24px"></div></div>
<span class="t" style="left:116.35px;top:480px;font-size:16.8px;line-height:21px;letter-spacing:0px;color:#4a4852;letter-spacing:-.4px;">584</span>
<span class="t" style="left:244.4px;top:480px;font-size:16.8px;line-height:21px;letter-spacing:0.45px;color:#4a4852;">рег 9</span>
<div class="pill" style="left:635.3px;top:476.35px;width:126.1px;height:27.3px"></div>
<svg class="i" style="left:640.9px;top:479.45px;" width="21" height="21" viewBox="0 0 21 21" fill="none" stroke="#8e8c94" stroke-width="1.55" stroke-linecap="round" stroke-linejoin="round"><circle cx="10.5" cy="10.5" r="8.6"/><path d="M10.5 5.8v4.7l3.4 2"/></svg>
<span class="t" style="left:668.45px;top:481px;font-size:14.8px;line-height:18px;letter-spacing:0.015px;color:#9a98a0;">Без терміну</span>
<svg class="i" style="left:873.1px;top:471.15px" width="39.1" height="39.1" viewBox="0 0 40 40"><clipPath id="c16"><circle cx="20" cy="20" r="20"/></clipPath><g clip-path="url(#c16)">
<rect width="40" height="40" fill="#3b2506"/>
<path d="M0 0h26l-8 12-18 8z" fill="#402807"/>
<path d="M30 3l10 5v30l-12 2z" fill="#4a3410"/>
<path d="M34.5 8.5l5.5 2v8.3h-6.5z" fill="#50d6cd"/>
<path d="M32 20.6h8v9l-9 2.4z" fill="#5de6dc"/>
<path d="M36 24l4 4v3l-6-1z" fill="#7af0e6"/>
<path d="M33.3 5.5l2.3 1-5.3 26.5-2.3-.5z" fill="#69731f"/>
<path d="M15 40l4-4 10-2 9-3.5v9.5z" fill="#c6871c"/>
<path d="M7.5 17.5h8v7.5h-8z" fill="#a4175a"/>
<path d="M9.8 19h6.2v5h-6.2z" fill="#1b1b7c"/>
<path d="M0 24.3l14 .6v1.3l-14-.5z" fill="#1f7d79"/>
<path d="M5.5 31.3l8-3.3 4.5 3.8-6 1.2z" fill="#8daa3b"/>
<path d="M14 32.5h9.5l2 4-11 2z" fill="#070a06"/>
<path d="M16.8 13.5l6-1.5 6.5 3 1 7.5-3 8-9 2-5.3-5 2.3-7.5z" fill="#84a5a9"/>
<path d="M18 20l8 2-1.5 7-8-2z" fill="#8fb0b3"/>
<path d="M24.3 3.2l8.3 3.2-3.3 12-9-3.7z" fill="#7ea3a8"/>
<path d="M28.8 1.3l1.7.6-.8 2.5-1.7-.6z" fill="#7ea3a8"/>
<path d="M25.2 4.8l5.7 2.2-1 3.4-5.7-2.2z" fill="#e6df8c"/>
<path d="M23.7 9.6l5.6 2.2-1 3.5-5.6-2.2z" fill="#e6df8c"/>
<path d="M26.8 6.3l1.5.6-.5 1.5-1.5-.6zM25.3 11.2l1.5.6-.5 1.5-1.5-.6z" fill="#5f6b3a"/>
<path d="M12.8 9.2l2.7.5 3.3 4.3-1.8 1.6z" fill="#6f9195"/>
<path d="M11.6 8h3.3v3.2h-3.3z" fill="#274b47"/>
<path d="M27.5 20l3 1 .5 5-2 .5z" fill="#708f93"/>
<path d="M28.3 22.5h2.7v3.2h-2.7z" fill="#5b6a2a"/>
<path d="M13 26.5h2.7l-.3 13.5h-2.7z" fill="#7b9da3"/>
<path d="M18.5 29.5l2.5-1.8 8.2 10.5-2.6 1.5z" fill="#7b9da3"/>
<path d="M24 27.3l2.8.5-.3 2.3-2.8-.5z" fill="#1c3da2"/>
</g></svg>
<span class="t" style="left:931.25px;top:470px;font-size:16.8px;line-height:21px;letter-spacing:0.53px;color:#4a4852;">Test Testovich Testov</span>
<span class="t" style="left:931px;top:493px;font-size:14.2px;line-height:18px;letter-spacing:0.333px;color:#9a98a0;">qa и овнер</span>
<div class="pill" style="left:1185.6px;top:470.4px;width:38.8px;height:38.7px;border-radius:50%"></div>
<svg class="i" style="left:1195px;top:480.1px;" width="20" height="20" viewBox="0 0 20 20" fill="none" stroke="#8e8c94" stroke-width="2" stroke-linecap="round" stroke-linejoin="round"><path d="M2.5 6.7h14.8M2.5 13.3h14.8"/></svg>
<div class="pill" style="left:1334.2px;top:475.75px;width:142.5px;height:29.4px;border-radius:14.7px;background:#efeff0"></div>
<span class="t" style="left:1345.35px;top:481px;font-size:15.4px;line-height:19px;letter-spacing:0.296px;color:#8e8c94;">Не заплановано</span>
<svg class="i" style="left:1523px;top:471.15px" width="39.1" height="39.1" viewBox="0 0 40 40"><clipPath id="c17"><circle cx="20" cy="20" r="20"/></clipPath><g clip-path="url(#c17)">
<rect width="40" height="40" fill="#3b2506"/>
<path d="M0 0h26l-8 12-18 8z" fill="#402807"/>
<path d="M30 3l10 5v30l-12 2z" fill="#4a3410"/>
<path d="M34.5 8.5l5.5 2v8.3h-6.5z" fill="#50d6cd"/>
<path d="M32 20.6h8v9l-9 2.4z" fill="#5de6dc"/>
<path d="M36 24l4 4v3l-6-1z" fill="#7af0e6"/>
<path d="M33.3 5.5l2.3 1-5.3 26.5-2.3-.5z" fill="#69731f"/>
<path d="M15 40l4-4 10-2 9-3.5v9.5z" fill="#c6871c"/>
<path d="M7.5 17.5h8v7.5h-8z" fill="#a4175a"/>
<path d="M9.8 19h6.2v5h-6.2z" fill="#1b1b7c"/>
<path d="M0 24.3l14 .6v1.3l-14-.5z" fill="#1f7d79"/>
<path d="M5.5 31.3l8-3.3 4.5 3.8-6 1.2z" fill="#8daa3b"/>
<path d="M14 32.5h9.5l2 4-11 2z" fill="#070a06"/>
<path d="M16.8 13.5l6-1.5 6.5 3 1 7.5-3 8-9 2-5.3-5 2.3-7.5z" fill="#84a5a9"/>
<path d="M18 20l8 2-1.5 7-8-2z" fill="#8fb0b3"/>
<path d="M24.3 3.2l8.3 3.2-3.3 12-9-3.7z" fill="#7ea3a8"/>
<path d="M28.8 1.3l1.7.6-.8 2.5-1.7-.6z" fill="#7ea3a8"/>
<path d="M25.2 4.8l5.7 2.2-1 3.4-5.7-2.2z" fill="#e6df8c"/>
<path d="M23.7 9.6l5.6 2.2-1 3.5-5.6-2.2z" fill="#e6df8c"/>
<path d="M26.8 6.3l1.5.6-.5 1.5-1.5-.6zM25.3 11.2l1.5.6-.5 1.5-1.5-.6z" fill="#5f6b3a"/>
<path d="M12.8 9.2l2.7.5 3.3 4.3-1.8 1.6z" fill="#6f9195"/>
<path d="M11.6 8h3.3v3.2h-3.3z" fill="#274b47"/>
<path d="M27.5 20l3 1 .5 5-2 .5z" fill="#708f93"/>
<path d="M28.3 22.5h2.7v3.2h-2.7z" fill="#5b6a2a"/>
<path d="M13 26.5h2.7l-.3 13.5h-2.7z" fill="#7b9da3"/>
<path d="M18.5 29.5l2.5-1.8 8.2 10.5-2.6 1.5z" fill="#7b9da3"/>
<path d="M24 27.3l2.8.5-.3 2.3-2.8-.5z" fill="#1c3da2"/>
</g></svg>
<span class="t" style="left:1580.75px;top:470px;font-size:16.8px;line-height:21px;letter-spacing:0.54px;color:#4a4852;">Test Testovich Testov</span>
<span class="t" style="left:1580.5px;top:493px;font-size:14.2px;line-height:18px;letter-spacing:0.333px;color:#9a98a0;">qa и овнер</span>
<div class="row" style="top:518.94px"><div class="cb" style="left:15px;top:18.24px"></div></div>
<span class="t" style="left:116.35px;top:537px;font-size:16.8px;line-height:21px;letter-spacing:0px;color:#4a4852;letter-spacing:-.4px;">582</span>
<span class="t" style="left:244.4px;top:537px;font-size:16.8px;line-height:21px;letter-spacing:0.45px;color:#4a4852;">рег 2</span>
<div class="pill" style="left:635.3px;top:533.53px;width:126.1px;height:27.3px"></div>
<svg class="i" style="left:640.9px;top:536.63px;" width="21" height="21" viewBox="0 0 21 21" fill="none" stroke="#8e8c94" stroke-width="1.55" stroke-linecap="round" stroke-linejoin="round"><circle cx="10.5" cy="10.5" r="8.6"/><path d="M10.5 5.8v4.7l3.4 2"/></svg>
<span class="t" style="left:668.45px;top:538px;font-size:14.8px;line-height:18px;letter-spacing:0.015px;color:#9a98a0;">Без терміну</span>
<svg class="i" style="left:873.1px;top:528.33px" width="39.1" height="39.1" viewBox="0 0 40 40"><clipPath id="c18"><circle cx="20" cy="20" r="20"/></clipPath><g clip-path="url(#c18)">
<rect width="40" height="40" fill="#3b2506"/>
<path d="M0 0h26l-8 12-18 8z" fill="#402807"/>
<path d="M30 3l10 5v30l-12 2z" fill="#4a3410"/>
<path d="M34.5 8.5l5.5 2v8.3h-6.5z" fill="#50d6cd"/>
<path d="M32 20.6h8v9l-9 2.4z" fill="#5de6dc"/>
<path d="M36 24l4 4v3l-6-1z" fill="#7af0e6"/>
<path d="M33.3 5.5l2.3 1-5.3 26.5-2.3-.5z" fill="#69731f"/>
<path d="M15 40l4-4 10-2 9-3.5v9.5z" fill="#c6871c"/>
<path d="M7.5 17.5h8v7.5h-8z" fill="#a4175a"/>
<path d="M9.8 19h6.2v5h-6.2z" fill="#1b1b7c"/>
<path d="M0 24.3l14 .6v1.3l-14-.5z" fill="#1f7d79"/>
<path d="M5.5 31.3l8-3.3 4.5 3.8-6 1.2z" fill="#8daa3b"/>
<path d="M14 32.5h9.5l2 4-11 2z" fill="#070a06"/>
<path d="M16.8 13.5l6-1.5 6.5 3 1 7.5-3 8-9 2-5.3-5 2.3-7.5z" fill="#84a5a9"/>
<path d="M18 20l8 2-1.5 7-8-2z" fill="#8fb0b3"/>
<path d="M24.3 3.2l8.3 3.2-3.3 12-9-3.7z" fill="#7ea3a8"/>
<path d="M28.8 1.3l1.7.6-.8 2.5-1.7-.6z" fill="#7ea3a8"/>
<path d="M25.2 4.8l5.7 2.2-1 3.4-5.7-2.2z" fill="#e6df8c"/>
<path d="M23.7 9.6l5.6 2.2-1 3.5-5.6-2.2z" fill="#e6df8c"/>
<path d="M26.8 6.3l1.5.6-.5 1.5-1.5-.6zM25.3 11.2l1.5.6-.5 1.5-1.5-.6z" fill="#5f6b3a"/>
<path d="M12.8 9.2l2.7.5 3.3 4.3-1.8 1.6z" fill="#6f9195"/>
<path d="M11.6 8h3.3v3.2h-3.3z" fill="#274b47"/>
<path d="M27.5 20l3 1 .5 5-2 .5z" fill="#708f93"/>
<path d="M28.3 22.5h2.7v3.2h-2.7z" fill="#5b6a2a"/>
<path d="M13 26.5h2.7l-.3 13.5h-2.7z" fill="#7b9da3"/>
<path d="M18.5 29.5l2.5-1.8 8.2 10.5-2.6 1.5z" fill="#7b9da3"/>
<path d="M24 27.3l2.8.5-.3 2.3-2.8-.5z" fill="#1c3da2"/>
</g></svg>
<span class="t" style="left:931.25px;top:527px;font-size:16.8px;line-height:21px;letter-spacing:0.53px;color:#4a4852;">Test Testovich Testov</span>
<span class="t" style="left:931px;top:550px;font-size:14.2px;line-height:18px;letter-spacing:0.333px;color:#9a98a0;">qa и овнер</span>
<div class="pill" style="left:1185.6px;top:527.58px;width:38.8px;height:38.7px;border-radius:50%"></div>
<svg class="i" style="left:1195px;top:537.28px;" width="20" height="20" viewBox="0 0 20 20" fill="none" stroke="#8e8c94" stroke-width="2" stroke-linecap="round" stroke-linejoin="round"><path d="M2.5 6.7h14.8M2.5 13.3h14.8"/></svg>
<div class="pill" style="left:1334.2px;top:532.93px;width:142.5px;height:29.4px;border-radius:14.7px;background:#efeff0"></div>
<span class="t" style="left:1345.35px;top:538px;font-size:15.4px;line-height:19px;letter-spacing:0.296px;color:#8e8c94;">Не заплановано</span>
<svg class="i" style="left:1523px;top:528.33px" width="39.1" height="39.1" viewBox="0 0 40 40"><clipPath id="c19"><circle cx="20" cy="20" r="20"/></clipPath><g clip-path="url(#c19)">
<rect width="40" height="40" fill="#3b2506"/>
<path d="M0 0h26l-8 12-18 8z" fill="#402807"/>
<path d="M30 3l10 5v30l-12 2z" fill="#4a3410"/>
<path d="M34.5 8.5l5.5 2v8.3h-6.5z" fill="#50d6cd"/>
<path d="M32 20.6h8v9l-9 2.4z" fill="#5de6dc"/>
<path d="M36 24l4 4v3l-6-1z" fill="#7af0e6"/>
<path d="M33.3 5.5l2.3 1-5.3 26.5-2.3-.5z" fill="#69731f"/>
<path d="M15 40l4-4 10-2 9-3.5v9.5z" fill="#c6871c"/>
<path d="M7.5 17.5h8v7.5h-8z" fill="#a4175a"/>
<path d="M9.8 19h6.2v5h-6.2z" fill="#1b1b7c"/>
<path d="M0 24.3l14 .6v1.3l-14-.5z" fill="#1f7d79"/>
<path d="M5.5 31.3l8-3.3 4.5 3.8-6 1.2z" fill="#8daa3b"/>
<path d="M14 32.5h9.5l2 4-11 2z" fill="#070a06"/>
<path d="M16.8 13.5l6-1.5 6.5 3 1 7.5-3 8-9 2-5.3-5 2.3-7.5z" fill="#84a5a9"/>
<path d="M18 20l8 2-1.5 7-8-2z" fill="#8fb0b3"/>
<path d="M24.3 3.2l8.3 3.2-3.3 12-9-3.7z" fill="#7ea3a8"/>
<path d="M28.8 1.3l1.7.6-.8 2.5-1.7-.6z" fill="#7ea3a8"/>
<path d="M25.2 4.8l5.7 2.2-1 3.4-5.7-2.2z" fill="#e6df8c"/>
<path d="M23.7 9.6l5.6 2.2-1 3.5-5.6-2.2z" fill="#e6df8c"/>
<path d="M26.8 6.3l1.5.6-.5 1.5-1.5-.6zM25.3 11.2l1.5.6-.5 1.5-1.5-.6z" fill="#5f6b3a"/>
<path d="M12.8 9.2l2.7.5 3.3 4.3-1.8 1.6z" fill="#6f9195"/>
<path d="M11.6 8h3.3v3.2h-3.3z" fill="#274b47"/>
<path d="M27.5 20l3 1 .5 5-2 .5z" fill="#708f93"/>
<path d="M28.3 22.5h2.7v3.2h-2.7z" fill="#5b6a2a"/>
<path d="M13 26.5h2.7l-.3 13.5h-2.7z" fill="#7b9da3"/>
<path d="M18.5 29.5l2.5-1.8 8.2 10.5-2.6 1.5z" fill="#7b9da3"/>
<path d="M24 27.3l2.8.5-.3 2.3-2.8-.5z" fill="#1c3da2"/>
</g></svg>
<span class="t" style="left:1580.75px;top:527px;font-size:16.8px;line-height:21px;letter-spacing:0.54px;color:#4a4852;">Test Testovich Testov</span>
<span class="t" style="left:1580.5px;top:550px;font-size:14.2px;line-height:18px;letter-spacing:0.333px;color:#9a98a0;">qa и овнер</span>
<div class="row" style="top:576.12px"><div class="cb" style="left:15px;top:18.24px"></div></div>
<span class="t" style="left:116.35px;top:594px;font-size:16.8px;line-height:21px;letter-spacing:0px;color:#4a4852;letter-spacing:-.4px;">581</span>
<span class="t" style="left:244.4px;top:594px;font-size:16.8px;line-height:21px;letter-spacing:0.45px;color:#4a4852;">рег 3</span>
<div class="pill" style="left:635.3px;top:590.71px;width:126.1px;height:27.3px"></div>
<svg class="i" style="left:640.9px;top:593.81px;" width="21" height="21" viewBox="0 0 21 21" fill="none" stroke="#8e8c94" stroke-width="1.55" stroke-linecap="round" stroke-linejoin="round"><circle cx="10.5" cy="10.5" r="8.6"/><path d="M10.5 5.8v4.7l3.4 2"/></svg>
<span class="t" style="left:668.45px;top:595px;font-size:14.8px;line-height:18px;letter-spacing:0.015px;color:#9a98a0;">Без терміну</span>
<svg class="i" style="left:873.1px;top:585.51px" width="39.1" height="39.1" viewBox="0 0 40 40"><clipPath id="c20"><circle cx="20" cy="20" r="20"/></clipPath><g clip-path="url(#c20)">
<rect width="40" height="40" fill="#3b2506"/>
<path d="M0 0h26l-8 12-18 8z" fill="#402807"/>
<path d="M30 3l10 5v30l-12 2z" fill="#4a3410"/>
<path d="M34.5 8.5l5.5 2v8.3h-6.5z" fill="#50d6cd"/>
<path d="M32 20.6h8v9l-9 2.4z" fill="#5de6dc"/>
<path d="M36 24l4 4v3l-6-1z" fill="#7af0e6"/>
<path d="M33.3 5.5l2.3 1-5.3 26.5-2.3-.5z" fill="#69731f"/>
<path d="M15 40l4-4 10-2 9-3.5v9.5z" fill="#c6871c"/>
<path d="M7.5 17.5h8v7.5h-8z" fill="#a4175a"/>
<path d="M9.8 19h6.2v5h-6.2z" fill="#1b1b7c"/>
<path d="M0 24.3l14 .6v1.3l-14-.5z" fill="#1f7d79"/>
<path d="M5.5 31.3l8-3.3 4.5 3.8-6 1.2z" fill="#8daa3b"/>
<path d="M14 32.5h9.5l2 4-11 2z" fill="#070a06"/>
<path d="M16.8 13.5l6-1.5 6.5 3 1 7.5-3 8-9 2-5.3-5 2.3-7.5z" fill="#84a5a9"/>
<path d="M18 20l8 2-1.5 7-8-2z" fill="#8fb0b3"/>
<path d="M24.3 3.2l8.3 3.2-3.3 12-9-3.7z" fill="#7ea3a8"/>
<path d="M28.8 1.3l1.7.6-.8 2.5-1.7-.6z" fill="#7ea3a8"/>
<path d="M25.2 4.8l5.7 2.2-1 3.4-5.7-2.2z" fill="#e6df8c"/>
<path d="M23.7 9.6l5.6 2.2-1 3.5-5.6-2.2z" fill="#e6df8c"/>
<path d="M26.8 6.3l1.5.6-.5 1.5-1.5-.6zM25.3 11.2l1.5.6-.5 1.5-1.5-.6z" fill="#5f6b3a"/>
<path d="M12.8 9.2l2.7.5 3.3 4.3-1.8 1.6z" fill="#6f9195"/>
<path d="M11.6 8h3.3v3.2h-3.3z" fill="#274b47"/>
<path d="M27.5 20l3 1 .5 5-2 .5z" fill="#708f93"/>
<path d="M28.3 22.5h2.7v3.2h-2.7z" fill="#5b6a2a"/>
<path d="M13 26.5h2.7l-.3 13.5h-2.7z" fill="#7b9da3"/>
<path d="M18.5 29.5l2.5-1.8 8.2 10.5-2.6 1.5z" fill="#7b9da3"/>
<path d="M24 27.3l2.8.5-.3 2.3-2.8-.5z" fill="#1c3da2"/>
</g></svg>
<span class="t" style="left:931.25px;top:585px;font-size:16.8px;line-height:21px;letter-spacing:0.53px;color:#4a4852;">Test Testovich Testov</span>
<span class="t" style="left:931px;top:608px;font-size:14.2px;line-height:18px;letter-spacing:0.333px;color:#9a98a0;">qa и овнер</span>
<div class="pill" style="left:1185.6px;top:584.76px;width:38.8px;height:38.7px;border-radius:50%"></div>
<svg class="i" style="left:1195px;top:594.46px;" width="20" height="20" viewBox="0 0 20 20" fill="none" stroke="#8e8c94" stroke-width="2" stroke-linecap="round" stroke-linejoin="round"><path d="M2.5 6.7h14.8M2.5 13.3h14.8"/></svg>
<div class="pill" style="left:1334.2px;top:590.11px;width:142.5px;height:29.4px;border-radius:14.7px;background:#efeff0"></div>
<span class="t" style="left:1345.35px;top:595px;font-size:15.4px;line-height:19px;letter-spacing:0.296px;color:#8e8c94;">Не заплановано</span>
<svg class="i" style="left:1523px;top:585.51px" width="39.1" height="39.1" viewBox="0 0 40 40"><clipPath id="c21"><circle cx="20" cy="20" r="20"/></clipPath><g clip-path="url(#c21)">
<rect width="40" height="40" fill="#3b2506"/>
<path d="M0 0h26l-8 12-18 8z" fill="#402807"/>
<path d="M30 3l10 5v30l-12 2z" fill="#4a3410"/>
<path d="M34.5 8.5l5.5 2v8.3h-6.5z" fill="#50d6cd"/>
<path d="M32 20.6h8v9l-9 2.4z" fill="#5de6dc"/>
<path d="M36 24l4 4v3l-6-1z" fill="#7af0e6"/>
<path d="M33.3 5.5l2.3 1-5.3 26.5-2.3-.5z" fill="#69731f"/>
<path d="M15 40l4-4 10-2 9-3.5v9.5z" fill="#c6871c"/>
<path d="M7.5 17.5h8v7.5h-8z" fill="#a4175a"/>
<path d="M9.8 19h6.2v5h-6.2z" fill="#1b1b7c"/>
<path d="M0 24.3l14 .6v1.3l-14-.5z" fill="#1f7d79"/>
<path d="M5.5 31.3l8-3.3 4.5 3.8-6 1.2z" fill="#8daa3b"/>
<path d="M14 32.5h9.5l2 4-11 2z" fill="#070a06"/>
<path d="M16.8 13.5l6-1.5 6.5 3 1 7.5-3 8-9 2-5.3-5 2.3-7.5z" fill="#84a5a9"/>
<path d="M18 20l8 2-1.5 7-8-2z" fill="#8fb0b3"/>
<path d="M24.3 3.2l8.3 3.2-3.3 12-9-3.7z" fill="#7ea3a8"/>
<path d="M28.8 1.3l1.7.6-.8 2.5-1.7-.6z" fill="#7ea3a8"/>
<path d="M25.2 4.8l5.7 2.2-1 3.4-5.7-2.2z" fill="#e6df8c"/>
<path d="M23.7 9.6l5.6 2.2-1 3.5-5.6-2.2z" fill="#e6df8c"/>
<path d="M26.8 6.3l1.5.6-.5 1.5-1.5-.6zM25.3 11.2l1.5.6-.5 1.5-1.5-.6z" fill="#5f6b3a"/>
<path d="M12.8 9.2l2.7.5 3.3 4.3-1.8 1.6z" fill="#6f9195"/>
<path d="M11.6 8h3.3v3.2h-3.3z" fill="#274b47"/>
<path d="M27.5 20l3 1 .5 5-2 .5z" fill="#708f93"/>
<path d="M28.3 22.5h2.7v3.2h-2.7z" fill="#5b6a2a"/>
<path d="M13 26.5h2.7l-.3 13.5h-2.7z" fill="#7b9da3"/>
<path d="M18.5 29.5l2.5-1.8 8.2 10.5-2.6 1.5z" fill="#7b9da3"/>
<path d="M24 27.3l2.8.5-.3 2.3-2.8-.5z" fill="#1c3da2"/>
</g></svg>
<span class="t" style="left:1580.75px;top:585px;font-size:16.8px;line-height:21px;letter-spacing:0.54px;color:#4a4852;">Test Testovich Testov</span>
<span class="t" style="left:1580.5px;top:608px;font-size:14.2px;line-height:18px;letter-spacing:0.333px;color:#9a98a0;">qa и овнер</span>
<div class="row" style="top:633.3px"><div class="cb" style="left:15px;top:18.24px"></div></div>
<span class="t" style="left:116.35px;top:651px;font-size:16.8px;line-height:21px;letter-spacing:0px;color:#4a4852;letter-spacing:-.4px;">580</span>
<span class="t" style="left:244.4px;top:651px;font-size:16.8px;line-height:21px;letter-spacing:0.387px;color:#4a4852;">рег 4</span>
<div class="pill" style="left:635.3px;top:647.89px;width:126.1px;height:27.3px"></div>
<svg class="i" style="left:640.9px;top:650.99px;" width="21" height="21" viewBox="0 0 21 21" fill="none" stroke="#8e8c94" stroke-width="1.55" stroke-linecap="round" stroke-linejoin="round"><circle cx="10.5" cy="10.5" r="8.6"/><path d="M10.5 5.8v4.7l3.4 2"/></svg>
<span class="t" style="left:668.45px;top:652px;font-size:14.8px;line-height:18px;letter-spacing:0.015px;color:#9a98a0;">Без терміну</span>
<svg class="i" style="left:873.1px;top:642.69px" width="39.1" height="39.1" viewBox="0 0 40 40"><clipPath id="c22"><circle cx="20" cy="20" r="20"/></clipPath><g clip-path="url(#c22)">
<rect width="40" height="40" fill="#3b2506"/>
<path d="M0 0h26l-8 12-18 8z" fill="#402807"/>
<path d="M30 3l10 5v30l-12 2z" fill="#4a3410"/>
<path d="M34.5 8.5l5.5 2v8.3h-6.5z" fill="#50d6cd"/>
<path d="M32 20.6h8v9l-9 2.4z" fill="#5de6dc"/>
<path d="M36 24l4 4v3l-6-1z" fill="#7af0e6"/>
<path d="M33.3 5.5l2.3 1-5.3 26.5-2.3-.5z" fill="#69731f"/>
<path d="M15 40l4-4 10-2 9-3.5v9.5z" fill="#c6871c"/>
<path d="M7.5 17.5h8v7.5h-8z" fill="#a4175a"/>
<path d="M9.8 19h6.2v5h-6.2z" fill="#1b1b7c"/>
<path d="M0 24.3l14 .6v1.3l-14-.5z" fill="#1f7d79"/>
<path d="M5.5 31.3l8-3.3 4.5 3.8-6 1.2z" fill="#8daa3b"/>
<path d="M14 32.5h9.5l2 4-11 2z" fill="#070a06"/>
<path d="M16.8 13.5l6-1.5 6.5 3 1 7.5-3 8-9 2-5.3-5 2.3-7.5z" fill="#84a5a9"/>
<path d="M18 20l8 2-1.5 7-8-2z" fill="#8fb0b3"/>
<path d="M24.3 3.2l8.3 3.2-3.3 12-9-3.7z" fill="#7ea3a8"/>
<path d="M28.8 1.3l1.7.6-.8 2.5-1.7-.6z" fill="#7ea3a8"/>
<path d="M25.2 4.8l5.7 2.2-1 3.4-5.7-2.2z" fill="#e6df8c"/>
<path d="M23.7 9.6l5.6 2.2-1 3.5-5.6-2.2z" fill="#e6df8c"/>
<path d="M26.8 6.3l1.5.6-.5 1.5-1.5-.6zM25.3 11.2l1.5.6-.5 1.5-1.5-.6z" fill="#5f6b3a"/>
<path d="M12.8 9.2l2.7.5 3.3 4.3-1.8 1.6z" fill="#6f9195"/>
<path d="M11.6 8h3.3v3.2h-3.3z" fill="#274b47"/>
<path d="M27.5 20l3 1 .5 5-2 .5z" fill="#708f93"/>
<path d="M28.3 22.5h2.7v3.2h-2.7z" fill="#5b6a2a"/>
<path d="M13 26.5h2.7l-.3 13.5h-2.7z" fill="#7b9da3"/>
<path d="M18.5 29.5l2.5-1.8 8.2 10.5-2.6 1.5z" fill="#7b9da3"/>
<path d="M24 27.3l2.8.5-.3 2.3-2.8-.5z" fill="#1c3da2"/>
</g></svg>
<span class="t" style="left:931.25px;top:642px;font-size:16.8px;line-height:21px;letter-spacing:0.53px;color:#4a4852;">Test Testovich Testov</span>
<span class="t" style="left:931px;top:665px;font-size:14.2px;line-height:18px;letter-spacing:0.333px;color:#9a98a0;">qa и овнер</span>
<div class="pill" style="left:1185.6px;top:641.94px;width:38.8px;height:38.7px;border-radius:50%"></div>
<svg class="i" style="left:1195px;top:651.64px;" width="20" height="20" viewBox="0 0 20 20" fill="none" stroke="#8e8c94" stroke-width="2" stroke-linecap="round" stroke-linejoin="round"><path d="M2.5 6.7h14.8M2.5 13.3h14.8"/></svg>
<div class="pill" style="left:1334.2px;top:647.29px;width:142.5px;height:29.4px;border-radius:14.7px;background:#efeff0"></div>
<span class="t" style="left:1345.35px;top:652px;font-size:15.4px;line-height:19px;letter-spacing:0.296px;color:#8e8c94;">Не заплановано</span>
<svg class="i" style="left:1523px;top:642.69px" width="39.1" height="39.1" viewBox="0 0 40 40"><clipPath id="c23"><circle cx="20" cy="20" r="20"/></clipPath><g clip-path="url(#c23)">
<rect width="40" height="40" fill="#3b2506"/>
<path d="M0 0h26l-8 12-18 8z" fill="#402807"/>
<path d="M30 3l10 5v30l-12 2z" fill="#4a3410"/>
<path d="M34.5 8.5l5.5 2v8.3h-6.5z" fill="#50d6cd"/>
<path d="M32 20.6h8v9l-9 2.4z" fill="#5de6dc"/>
<path d="M36 24l4 4v3l-6-1z" fill="#7af0e6"/>
<path d="M33.3 5.5l2.3 1-5.3 26.5-2.3-.5z" fill="#69731f"/>
<path d="M15 40l4-4 10-2 9-3.5v9.5z" fill="#c6871c"/>
<path d="M7.5 17.5h8v7.5h-8z" fill="#a4175a"/>
<path d="M9.8 19h6.2v5h-6.2z" fill="#1b1b7c"/>
<path d="M0 24.3l14 .6v1.3l-14-.5z" fill="#1f7d79"/>
<path d="M5.5 31.3l8-3.3 4.5 3.8-6 1.2z" fill="#8daa3b"/>
<path d="M14 32.5h9.5l2 4-11 2z" fill="#070a06"/>
<path d="M16.8 13.5l6-1.5 6.5 3 1 7.5-3 8-9 2-5.3-5 2.3-7.5z" fill="#84a5a9"/>
<path d="M18 20l8 2-1.5 7-8-2z" fill="#8fb0b3"/>
<path d="M24.3 3.2l8.3 3.2-3.3 12-9-3.7z" fill="#7ea3a8"/>
<path d="M28.8 1.3l1.7.6-.8 2.5-1.7-.6z" fill="#7ea3a8"/>
<path d="M25.2 4.8l5.7 2.2-1 3.4-5.7-2.2z" fill="#e6df8c"/>
<path d="M23.7 9.6l5.6 2.2-1 3.5-5.6-2.2z" fill="#e6df8c"/>
<path d="M26.8 6.3l1.5.6-.5 1.5-1.5-.6zM25.3 11.2l1.5.6-.5 1.5-1.5-.6z" fill="#5f6b3a"/>
<path d="M12.8 9.2l2.7.5 3.3 4.3-1.8 1.6z" fill="#6f9195"/>
<path d="M11.6 8h3.3v3.2h-3.3z" fill="#274b47"/>
<path d="M27.5 20l3 1 .5 5-2 .5z" fill="#708f93"/>
<path d="M28.3 22.5h2.7v3.2h-2.7z" fill="#5b6a2a"/>
<path d="M13 26.5h2.7l-.3 13.5h-2.7z" fill="#7b9da3"/>
<path d="M18.5 29.5l2.5-1.8 8.2 10.5-2.6 1.5z" fill="#7b9da3"/>
<path d="M24 27.3l2.8.5-.3 2.3-2.8-.5z" fill="#1c3da2"/>
</g></svg>
<span class="t" style="left:1580.75px;top:642px;font-size:16.8px;line-height:21px;letter-spacing:0.54px;color:#4a4852;">Test Testovich Testov</span>
<span class="t" style="left:1580.5px;top:665px;font-size:14.2px;line-height:18px;letter-spacing:0.333px;color:#9a98a0;">qa и овнер</span>
<div class="row" style="top:690.48px"><div class="cb" style="left:15px;top:18.24px"></div></div>
<span class="t" style="left:116.35px;top:709px;font-size:16.8px;line-height:21px;letter-spacing:0px;color:#4a4852;letter-spacing:-.4px;">579</span>
<span class="t" style="left:244.4px;top:709px;font-size:16.8px;line-height:21px;letter-spacing:0.45px;color:#4a4852;">рег 5</span>
<div class="pill" style="left:635.3px;top:705.07px;width:126.1px;height:27.3px"></div>
<svg class="i" style="left:640.9px;top:708.17px;" width="21" height="21" viewBox="0 0 21 21" fill="none" stroke="#8e8c94" stroke-width="1.55" stroke-linecap="round" stroke-linejoin="round"><circle cx="10.5" cy="10.5" r="8.6"/><path d="M10.5 5.8v4.7l3.4 2"/></svg>
<span class="t" style="left:668.45px;top:709px;font-size:14.8px;line-height:18px;letter-spacing:0.015px;color:#9a98a0;">Без терміну</span>
<svg class="i" style="left:873.1px;top:699.87px" width="39.1" height="39.1" viewBox="0 0 40 40"><clipPath id="c24"><circle cx="20" cy="20" r="20"/></clipPath><g clip-path="url(#c24)">
<rect width="40" height="40" fill="#3b2506"/>
<path d="M0 0h26l-8 12-18 8z" fill="#402807"/>
<path d="M30 3l10 5v30l-12 2z" fill="#4a3410"/>
<path d="M34.5 8.5l5.5 2v8.3h-6.5z" fill="#50d6cd"/>
<path d="M32 20.6h8v9l-9 2.4z" fill="#5de6dc"/>
<path d="M36 24l4 4v3l-6-1z" fill="#7af0e6"/>
<path d="M33.3 5.5l2.3 1-5.3 26.5-2.3-.5z" fill="#69731f"/>
<path d="M15 40l4-4 10-2 9-3.5v9.5z" fill="#c6871c"/>
<path d="M7.5 17.5h8v7.5h-8z" fill="#a4175a"/>
<path d="M9.8 19h6.2v5h-6.2z" fill="#1b1b7c"/>
<path d="M0 24.3l14 .6v1.3l-14-.5z" fill="#1f7d79"/>
<path d="M5.5 31.3l8-3.3 4.5 3.8-6 1.2z" fill="#8daa3b"/>
<path d="M14 32.5h9.5l2 4-11 2z" fill="#070a06"/>
<path d="M16.8 13.5l6-1.5 6.5 3 1 7.5-3 8-9 2-5.3-5 2.3-7.5z" fill="#84a5a9"/>
<path d="M18 20l8 2-1.5 7-8-2z" fill="#8fb0b3"/>
<path d="M24.3 3.2l8.3 3.2-3.3 12-9-3.7z" fill="#7ea3a8"/>
<path d="M28.8 1.3l1.7.6-.8 2.5-1.7-.6z" fill="#7ea3a8"/>
<path d="M25.2 4.8l5.7 2.2-1 3.4-5.7-2.2z" fill="#e6df8c"/>
<path d="M23.7 9.6l5.6 2.2-1 3.5-5.6-2.2z" fill="#e6df8c"/>
<path d="M26.8 6.3l1.5.6-.5 1.5-1.5-.6zM25.3 11.2l1.5.6-.5 1.5-1.5-.6z" fill="#5f6b3a"/>
<path d="M12.8 9.2l2.7.5 3.3 4.3-1.8 1.6z" fill="#6f9195"/>
<path d="M11.6 8h3.3v3.2h-3.3z" fill="#274b47"/>
<path d="M27.5 20l3 1 .5 5-2 .5z" fill="#708f93"/>
<path d="M28.3 22.5h2.7v3.2h-2.7z" fill="#5b6a2a"/>
<path d="M13 26.5h2.7l-.3 13.5h-2.7z" fill="#7b9da3"/>
<path d="M18.5 29.5l2.5-1.8 8.2 10.5-2.6 1.5z" fill="#7b9da3"/>
<path d="M24 27.3l2.8.5-.3 2.3-2.8-.5z" fill="#1c3da2"/>
</g></svg>
<span class="t" style="left:931.25px;top:699px;font-size:16.8px;line-height:21px;letter-spacing:0.53px;color:#4a4852;">Test Testovich Testov</span>
<span class="t" style="left:931px;top:722px;font-size:14.2px;line-height:18px;letter-spacing:0.333px;color:#9a98a0;">qa и овнер</span>
<div class="pill" style="left:1185.6px;top:699.12px;width:38.8px;height:38.7px;border-radius:50%"></div>
<svg class="i" style="left:1195px;top:708.82px;" width="20" height="20" viewBox="0 0 20 20" fill="none" stroke="#8e8c94" stroke-width="2" stroke-linecap="round" stroke-linejoin="round"><path d="M2.5 6.7h14.8M2.5 13.3h14.8"/></svg>
<div class="pill" style="left:1334.2px;top:704.47px;width:142.5px;height:29.4px;border-radius:14.7px;background:#efeff0"></div>
<span class="t" style="left:1345.35px;top:709px;font-size:15.4px;line-height:19px;letter-spacing:0.296px;color:#8e8c94;">Не заплановано</span>
<svg class="i" style="left:1523px;top:699.87px" width="39.1" height="39.1" viewBox="0 0 40 40"><clipPath id="c25"><circle cx="20" cy="20" r="20"/></clipPath><g clip-path="url(#c25)">
<rect width="40" height="40" fill="#3b2506"/>
<path d="M0 0h26l-8 12-18 8z" fill="#402807"/>
<path d="M30 3l10 5v30l-12 2z" fill="#4a3410"/>
<path d="M34.5 8.5l5.5 2v8.3h-6.5z" fill="#50d6cd"/>
<path d="M32 20.6h8v9l-9 2.4z" fill="#5de6dc"/>
<path d="M36 24l4 4v3l-6-1z" fill="#7af0e6"/>
<path d="M33.3 5.5l2.3 1-5.3 26.5-2.3-.5z" fill="#69731f"/>
<path d="M15 40l4-4 10-2 9-3.5v9.5z" fill="#c6871c"/>
<path d="M7.5 17.5h8v7.5h-8z" fill="#a4175a"/>
<path d="M9.8 19h6.2v5h-6.2z" fill="#1b1b7c"/>
<path d="M0 24.3l14 .6v1.3l-14-.5z" fill="#1f7d79"/>
<path d="M5.5 31.3l8-3.3 4.5 3.8-6 1.2z" fill="#8daa3b"/>
<path d="M14 32.5h9.5l2 4-11 2z" fill="#070a06"/>
<path d="M16.8 13.5l6-1.5 6.5 3 1 7.5-3 8-9 2-5.3-5 2.3-7.5z" fill="#84a5a9"/>
<path d="M18 20l8 2-1.5 7-8-2z" fill="#8fb0b3"/>
<path d="M24.3 3.2l8.3 3.2-3.3 12-9-3.7z" fill="#7ea3a8"/>
<path d="M28.8 1.3l1.7.6-.8 2.5-1.7-.6z" fill="#7ea3a8"/>
<path d="M25.2 4.8l5.7 2.2-1 3.4-5.7-2.2z" fill="#e6df8c"/>
<path d="M23.7 9.6l5.6 2.2-1 3.5-5.6-2.2z" fill="#e6df8c"/>
<path d="M26.8 6.3l1.5.6-.5 1.5-1.5-.6zM25.3 11.2l1.5.6-.5 1.5-1.5-.6z" fill="#5f6b3a"/>
<path d="M12.8 9.2l2.7.5 3.3 4.3-1.8 1.6z" fill="#6f9195"/>
<path d="M11.6 8h3.3v3.2h-3.3z" fill="#274b47"/>
<path d="M27.5 20l3 1 .5 5-2 .5z" fill="#708f93"/>
<path d="M28.3 22.5h2.7v3.2h-2.7z" fill="#5b6a2a"/>
<path d="M13 26.5h2.7l-.3 13.5h-2.7z" fill="#7b9da3"/>
<path d="M18.5 29.5l2.5-1.8 8.2 10.5-2.6 1.5z" fill="#7b9da3"/>
<path d="M24 27.3l2.8.5-.3 2.3-2.8-.5z" fill="#1c3da2"/>
</g></svg>
<span class="t" style="left:1580.75px;top:699px;font-size:16.8px;line-height:21px;letter-spacing:0.54px;color:#4a4852;">Test Testovich Testov</span>
<span class="t" style="left:1580.5px;top:722px;font-size:14.2px;line-height:18px;letter-spacing:0.333px;color:#9a98a0;">qa и овнер</span>
<div id="thead">
<div class="cb" style="left:16px;top:20.1px;background:#f9fafc"></div>
<svg class="i" style="left:64px;top:20.1px;" width="22.4" height="22.4" viewBox="64 20.1 22.4 22.4" fill="none" stroke="#5c5965" stroke-width="1.8" stroke-linecap="round" stroke-linejoin="round"><path d="M72.86 24.7L72.9 22.39L77.5 22.39L77.54 24.7L79.75 25.98L81.76 24.85L84.07 28.84L82.08 30.02L82.08 32.58L84.07 33.76L81.76 37.75L79.75 36.62L77.54 37.9L77.5 40.21L72.9 40.21L72.86 37.9L70.65 36.62L68.64 37.75L66.33 33.76L68.32 32.58L68.32 30.02L66.33 28.84L68.64 24.85L70.65 25.98z"/><circle cx="75.2" cy="31.3" r="3.1"/></svg>
<span class="t" style="left:115.8px;top:22px;font-size:13.8px;line-height:17px;letter-spacing:0.287px;color:#55525e;-webkit-text-stroke:.45px #55525e;">НОМЕР</span>
<span class="t" style="left:244.1px;top:22px;font-size:13.8px;line-height:17px;letter-spacing:0.677px;color:#55525e;-webkit-text-stroke:.45px #55525e;">НАЗВА ЗАВДАННЯ</span>
<span class="t" style="left:625.6px;top:22px;font-size:13.8px;line-height:17px;letter-spacing:0.386px;color:#55525e;-webkit-text-stroke:.45px #55525e;">КІНЦЕВИЙ ТЕРМІН</span>
<span class="t" style="left:872.8px;top:22px;font-size:13.8px;line-height:17px;letter-spacing:0.827px;color:#55525e;-webkit-text-stroke:.45px #55525e;">ВІДПОВІДАЛЬНИЙ</span>
<span class="t" style="left:1161px;top:22px;font-size:13.8px;line-height:17px;letter-spacing:0.162px;color:#55525e;-webkit-text-stroke:.45px #55525e;">ПРІОРИТЕТ</span>
<span class="t" style="left:1338.55px;top:22px;font-size:13.8px;line-height:17px;letter-spacing:0.5px;color:#55525e;-webkit-text-stroke:.45px #55525e;">СТАТУС</span>
<span class="t" style="left:1522.3px;top:22px;font-size:13.8px;line-height:17px;letter-spacing:0.54px;color:#55525e;-webkit-text-stroke:.45px #55525e;">ПОСТАНОВНИК</span>
<div class="cdiv" style="left:221.9px"></div>
<div class="cdiv" style="left:599.4px"></div>
<div class="cdiv" style="left:827.8px"></div>
<div class="cdiv" style="left:1125.3px"></div>
<div class="cdiv" style="left:1302.7px"></div>
<div class="cdiv" style="left:1482.2px"></div>
</div>
</div>
<div id="banner">
<div class="abs" style="left:637.2px;top:13.8px;width:31.6px;height:32px;border-radius:4px;background:#ffd673"></div>
<svg class="i" style="left:640px;top:16px;" width="28" height="28" viewBox="640 16 28 28" fill="none" stroke="#e0a000" stroke-width="2" stroke-linecap="round" stroke-linejoin="round"><path d="M663.6 19.9Q653.4 21.3 651.6 30.9Q662.6 30 663.6 19.9z" fill="#fff"/><path d="M651 25.7Q645 25.8 644.5 31.3L651 31z"/><path d="M658 32.3Q658 38.3 652.5 38.9L652.7 32.3z"/><path d="M649.7 36.2C649.8 33.5 646.2 33.7 645 36.1L643.1 40.3 647.5 39C649.4 38.4 649.7 37.5 649.7 36.2z"/></svg>
<span class="t" style="left:683.65px;top:9px;font-size:18.2px;line-height:23px;letter-spacing:0.282px;color:#fffef8;font-weight:700;">Термін дії вашого тарифу скоро сплине!</span>
<span class="t" style="left:682.9px;top:35px;font-size:13.3px;line-height:17px;letter-spacing:0.727px;color:#fff9e8;">Щоб не втратити доступ до усіх платних функцій Uspacy – придбайте тариф.</span>
<div class="abs" style="left:1237px;top:11.5px;width:175px;height:36px;border:1.5px solid #fff8e0;border-radius:5px"></div>
<span class="t" style="left:1262.45px;top:20px;font-size:15.6px;line-height:20px;letter-spacing:0.212px;color:#fffdf5;-webkit-text-stroke:.55px #fffdf5;">Придбати тариф</span>
<svg class="i" style="left:1998px;top:22px" width="15" height="15" viewBox="0 0 15 15" stroke="#fff" stroke-width="2" stroke-linecap="round"><path d="M1.5 1.5l12 12M13.5 1.5l-12 12"/></svg>
</div>
<div class="abs" style="left:297px;top:1026px;width:1751px;height:34px;background:linear-gradient(180deg,rgba(60,60,80,0) 0%,rgba(60,60,80,.045) 55%,rgba(60,60,80,.17) 100%);z-index:2"></div>
<svg class="i" style="left:2036px;top:1048px;z-index:6" width="12" height="12" viewBox="0 0 12 12"><path d="M12 0v12H0A12 12 0 0 0 12 0z" fill="#101014"/></svg>
<svg class="i" style="left:1800px;top:20px;z-index:9" width="200" height="135" viewBox="1800 20 200 135"><path d="M1817.7 144.1L1962.3 45.3 1954 39.2 1991.4 35 1972 66.4 1967 58.7 1818.7 146.1z" fill="#ff2a0a"/></svg>
</div></body></html>
